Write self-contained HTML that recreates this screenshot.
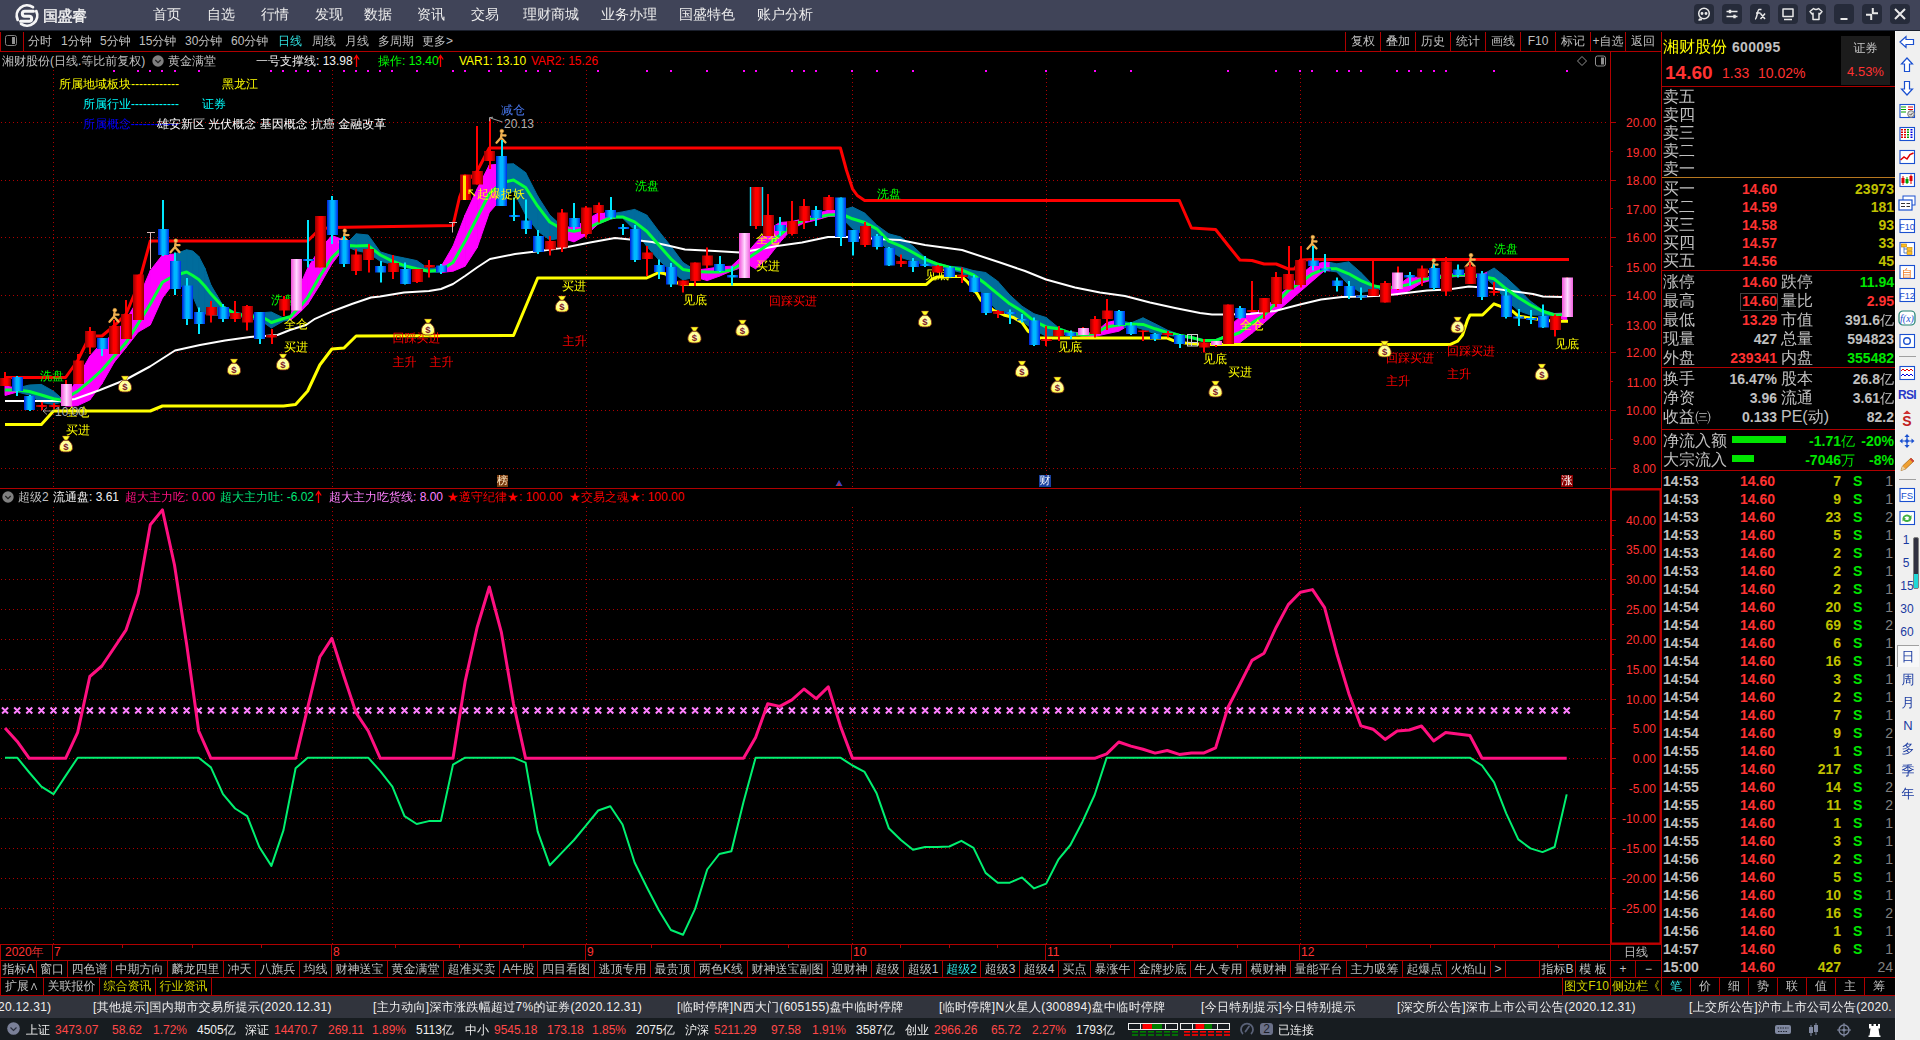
<!DOCTYPE html>
<html lang="zh-CN"><head><meta charset="utf-8"><title>国盛睿 - 湘财股份 600095</title><style>
html,body{margin:0;padding:0;background:#000;}
#app{position:relative;width:1920px;height:1040px;overflow:hidden;background:#000;font-family:"Liberation Sans","WenQuanYi Zen Hei",sans-serif;}
.t{position:absolute;white-space:nowrap;line-height:1;}
.lb{letter-spacing:0;}
.r{position:absolute;}
svg{overflow:visible;}
</style></head><body><div id="app">
<svg class="r" style="left:0;top:0" width="1920" height="1040" viewBox="0 0 1920 1040">
<defs><linearGradient id="gr" x1="0" x2="1" y1="0" y2="0"><stop offset="0" stop-color="#900000"/><stop offset=".4" stop-color="#ff0000"/><stop offset=".65" stop-color="#ff0000"/><stop offset="1" stop-color="#900000"/></linearGradient><linearGradient id="gb" x1="0" x2="1" y1="0" y2="0"><stop offset="0" stop-color="#0018d8"/><stop offset=".38" stop-color="#00b8ff"/><stop offset=".62" stop-color="#00b8ff"/><stop offset="1" stop-color="#0028e8"/></linearGradient><linearGradient id="gp" x1="0" x2="1" y1="0" y2="0"><stop offset="0" stop-color="#f050d8"/><stop offset=".5" stop-color="#ffd8ff"/><stop offset="1" stop-color="#f060e0"/></linearGradient><radialGradient id="gbag" cx=".5" cy=".45" r=".6"><stop offset="0" stop-color="#ffffd8"/><stop offset=".6" stop-color="#ffff90"/><stop offset="1" stop-color="#ffff20"/></radialGradient></defs>
<path d="M1 122.5H1607" stroke="#b00000" stroke-width="1" stroke-dasharray="1 3"/>
<path d="M1 180.5H1607" stroke="#b00000" stroke-width="1" stroke-dasharray="1 3"/>
<path d="M1 237.5H1607" stroke="#b00000" stroke-width="1" stroke-dasharray="1 3"/>
<path d="M1 295.5H1607" stroke="#b00000" stroke-width="1" stroke-dasharray="1 3"/>
<path d="M1 352.5H1607" stroke="#b00000" stroke-width="1" stroke-dasharray="1 3"/>
<path d="M1 410.5H1607" stroke="#b00000" stroke-width="1" stroke-dasharray="1 3"/>
<path d="M1 468.5H1607" stroke="#b00000" stroke-width="1" stroke-dasharray="1 3"/>
<path d="M53.5 70V488" stroke="#b00000" stroke-width="1" stroke-dasharray="1 3"/>
<path d="M53.5 507V944" stroke="#b00000" stroke-width="1" stroke-dasharray="1 3"/>
<path d="M332.5 70V488" stroke="#b00000" stroke-width="1" stroke-dasharray="1 3"/>
<path d="M332.5 507V944" stroke="#b00000" stroke-width="1" stroke-dasharray="1 3"/>
<path d="M586.5 70V488" stroke="#b00000" stroke-width="1" stroke-dasharray="1 3"/>
<path d="M586.5 507V944" stroke="#b00000" stroke-width="1" stroke-dasharray="1 3"/>
<path d="M852.5 70V488" stroke="#b00000" stroke-width="1" stroke-dasharray="1 3"/>
<path d="M852.5 507V944" stroke="#b00000" stroke-width="1" stroke-dasharray="1 3"/>
<path d="M1046.5 70V488" stroke="#b00000" stroke-width="1" stroke-dasharray="1 3"/>
<path d="M1046.5 507V944" stroke="#b00000" stroke-width="1" stroke-dasharray="1 3"/>
<path d="M1300.5 70V488" stroke="#b00000" stroke-width="1" stroke-dasharray="1 3"/>
<path d="M1300.5 507V944" stroke="#b00000" stroke-width="1" stroke-dasharray="1 3"/>
<rect x="113" y="70" width="2" height="2" fill="#ff00ff"/>
<rect x="137" y="70" width="2" height="2" fill="#ff00ff"/>
<rect x="149" y="70" width="2" height="2" fill="#ff00ff"/>
<rect x="161" y="70" width="2" height="2" fill="#ff00ff"/>
<rect x="174" y="70" width="2" height="2" fill="#ff00ff"/>
<rect x="198" y="70" width="2" height="2" fill="#ff00ff"/>
<rect x="270" y="70" width="2" height="2" fill="#ff00ff"/>
<rect x="282" y="70" width="2" height="2" fill="#ff00ff"/>
<rect x="295" y="70" width="2" height="2" fill="#ff00ff"/>
<rect x="307" y="70" width="2" height="2" fill="#ff00ff"/>
<rect x="319" y="70" width="2" height="2" fill="#ff00ff"/>
<rect x="343" y="70" width="2" height="2" fill="#ff00ff"/>
<rect x="355" y="70" width="2" height="2" fill="#ff00ff"/>
<rect x="367" y="70" width="2" height="2" fill="#ff00ff"/>
<rect x="379" y="70" width="2" height="2" fill="#ff00ff"/>
<rect x="391" y="70" width="2" height="2" fill="#ff00ff"/>
<rect x="416" y="70" width="2" height="2" fill="#ff00ff"/>
<rect x="452" y="70" width="2" height="2" fill="#ff00ff"/>
<rect x="464" y="70" width="2" height="2" fill="#ff00ff"/>
<rect x="488" y="70" width="2" height="2" fill="#ff00ff"/>
<rect x="500" y="70" width="2" height="2" fill="#ff00ff"/>
<rect x="525" y="70" width="2" height="2" fill="#ff00ff"/>
<rect x="537" y="70" width="2" height="2" fill="#ff00ff"/>
<rect x="549" y="70" width="2" height="2" fill="#ff00ff"/>
<rect x="597" y="70" width="2" height="2" fill="#ff00ff"/>
<rect x="646" y="70" width="2" height="2" fill="#ff00ff"/>
<rect x="670" y="70" width="2" height="2" fill="#ff00ff"/>
<rect x="706" y="70" width="2" height="2" fill="#ff00ff"/>
<rect x="743" y="70" width="2" height="2" fill="#ff00ff"/>
<rect x="755" y="70" width="2" height="2" fill="#ff00ff"/>
<rect x="791" y="70" width="2" height="2" fill="#ff00ff"/>
<rect x="803" y="70" width="2" height="2" fill="#ff00ff"/>
<rect x="815" y="70" width="2" height="2" fill="#ff00ff"/>
<rect x="851" y="70" width="2" height="2" fill="#ff00ff"/>
<rect x="876" y="70" width="2" height="2" fill="#ff00ff"/>
<rect x="912" y="70" width="2" height="2" fill="#ff00ff"/>
<rect x="985" y="70" width="2" height="2" fill="#ff00ff"/>
<rect x="1045" y="70" width="2" height="2" fill="#ff00ff"/>
<rect x="1094" y="70" width="2" height="2" fill="#ff00ff"/>
<rect x="1130" y="70" width="2" height="2" fill="#ff00ff"/>
<rect x="1227" y="70" width="2" height="2" fill="#ff00ff"/>
<rect x="1275" y="70" width="2" height="2" fill="#ff00ff"/>
<rect x="1299" y="70" width="2" height="2" fill="#ff00ff"/>
<rect x="1311" y="70" width="2" height="2" fill="#ff00ff"/>
<rect x="1336" y="70" width="2" height="2" fill="#ff00ff"/>
<rect x="1348" y="70" width="2" height="2" fill="#ff00ff"/>
<rect x="1360" y="70" width="2" height="2" fill="#ff00ff"/>
<rect x="1396" y="70" width="2" height="2" fill="#ff00ff"/>
<rect x="1408" y="70" width="2" height="2" fill="#ff00ff"/>
<rect x="1420" y="70" width="2" height="2" fill="#ff00ff"/>
<rect x="1433" y="70" width="2" height="2" fill="#ff00ff"/>
<rect x="1445" y="70" width="2" height="2" fill="#ff00ff"/>
<rect x="1493" y="70" width="2" height="2" fill="#ff00ff"/>
<rect x="1566" y="70" width="2" height="2" fill="#ff00ff"/>
<polygon points="5.0,386.0 17.2,388.0 17.2,392.0 5.0,395.5" fill="#ff00ff" stroke="#ff00ff" stroke-width="1"/>
<polygon points="17.2,388.0 29.3,385.0 29.3,395.0 17.2,392.0" fill="#006c9c" stroke="#006c9c" stroke-width="1"/>
<polygon points="29.3,385.0 41.4,384.4 41.4,402.5 29.3,395.0" fill="#006c9c" stroke="#006c9c" stroke-width="1"/>
<polygon points="41.4,384.4 53.5,391.2 53.5,404.4 41.4,402.5" fill="#006c9c" stroke="#006c9c" stroke-width="1"/>
<polygon points="53.5,391.2 60.7,397.5 60.7,402.5 53.5,404.4" fill="#006c9c" stroke="#006c9c" stroke-width="1"/>
<polygon points="60.7,397.5 65.6,392.0 65.6,406.0 60.7,402.5" fill="#ff00ff" stroke="#ff00ff" stroke-width="1"/>
<polygon points="65.6,392.0 71.0,390.0 71.0,406.2 65.6,406.0" fill="#ff00ff" stroke="#ff00ff" stroke-width="1"/>
<polygon points="71.0,390.0 77.7,377.5 77.7,405.6 71.0,406.2" fill="#ff00ff" stroke="#ff00ff" stroke-width="1"/>
<polygon points="77.7,377.5 89.8,356.2 89.8,400.0 77.7,405.6" fill="#ff00ff" stroke="#ff00ff" stroke-width="1"/>
<polygon points="89.8,356.2 101.9,342.5 101.9,383.8 89.8,400.0" fill="#ff00ff" stroke="#ff00ff" stroke-width="1"/>
<polygon points="101.9,342.5 114.0,334.0 114.0,362.5 101.9,383.8" fill="#ff00ff" stroke="#ff00ff" stroke-width="1"/>
<polygon points="114.0,334.0 126.1,320.0 126.1,347.5 114.0,362.5" fill="#ff00ff" stroke="#ff00ff" stroke-width="1"/>
<polygon points="126.1,320.0 138.2,299.0 138.2,332.0 126.1,347.5" fill="#ff00ff" stroke="#ff00ff" stroke-width="1"/>
<polygon points="138.2,299.0 150.3,270.5 150.3,325.0 138.2,332.0" fill="#ff00ff" stroke="#ff00ff" stroke-width="1"/>
<polygon points="150.3,270.5 162.4,255.0 162.4,298.0 150.3,325.0" fill="#ff00ff" stroke="#ff00ff" stroke-width="1"/>
<polygon points="162.4,255.0 174.5,254.0 174.5,282.0 162.4,298.0" fill="#ff00ff" stroke="#ff00ff" stroke-width="1"/>
<polygon points="174.5,254.0 186.6,249.8 186.6,290.0 174.5,282.0" fill="#006c9c" stroke="#006c9c" stroke-width="1"/>
<polygon points="186.6,249.8 192.7,251.0 192.7,296.0 186.6,290.0" fill="#006c9c" stroke="#006c9c" stroke-width="1"/>
<polygon points="192.7,251.0 198.7,256.2 198.7,310.0 192.7,296.0" fill="#006c9c" stroke="#006c9c" stroke-width="1"/>
<polygon points="198.7,256.2 204.8,268.0 204.8,313.8 198.7,310.0" fill="#006c9c" stroke="#006c9c" stroke-width="1"/>
<polygon points="204.8,268.0 210.9,285.0 210.9,315.0 204.8,313.8" fill="#006c9c" stroke="#006c9c" stroke-width="1"/>
<polygon points="210.9,285.0 223.0,305.6 223.0,316.0 210.9,315.0" fill="#006c9c" stroke="#006c9c" stroke-width="1"/>
<polygon points="223.0,305.6 235.1,312.0 235.1,316.0 223.0,316.0" fill="#006c9c" stroke="#006c9c" stroke-width="1"/>
<polygon points="235.1,312.0 247.2,314.5 247.2,318.0 235.1,316.0" fill="#006c9c" stroke="#006c9c" stroke-width="1"/>
<polygon points="247.2,314.5 259.3,314.0 259.3,321.0 247.2,318.0" fill="#006c9c" stroke="#006c9c" stroke-width="1"/>
<polygon points="259.3,314.0 265.3,312.5 265.3,323.8 259.3,321.0" fill="#006c9c" stroke="#006c9c" stroke-width="1"/>
<polygon points="265.3,312.5 271.4,312.0 271.4,328.0 265.3,323.8" fill="#006c9c" stroke="#006c9c" stroke-width="1"/>
<polygon points="271.4,312.0 283.5,318.0 283.5,321.0 271.4,328.0" fill="#006c9c" stroke="#006c9c" stroke-width="1"/>
<polygon points="283.5,318.0 290.8,316.0 290.8,320.0 283.5,321.0" fill="#006c9c" stroke="#006c9c" stroke-width="1"/>
<polygon points="290.8,316.0 295.6,292.0 295.6,316.0 290.8,320.0" fill="#ff00ff" stroke="#ff00ff" stroke-width="1"/>
<polygon points="295.6,292.0 301.0,283.0 301.0,311.2 295.6,316.0" fill="#ff00ff" stroke="#ff00ff" stroke-width="1"/>
<polygon points="301.0,283.0 307.7,268.0 307.7,304.4 301.0,311.2" fill="#ff00ff" stroke="#ff00ff" stroke-width="1"/>
<polygon points="307.7,268.0 319.8,248.8 319.8,285.0 307.7,304.4" fill="#ff00ff" stroke="#ff00ff" stroke-width="1"/>
<polygon points="319.8,248.8 331.9,235.6 331.9,263.8 319.8,285.0" fill="#ff00ff" stroke="#ff00ff" stroke-width="1"/>
<polygon points="331.9,235.6 344.0,240.0 344.0,248.0 331.9,263.8" fill="#ff00ff" stroke="#ff00ff" stroke-width="1"/>
<polygon points="344.0,240.0 349.5,240.6 349.5,247.8 344.0,248.0" fill="#ff00ff" stroke="#ff00ff" stroke-width="1"/>
<polygon points="349.5,240.6 356.1,233.8 356.1,250.6 349.5,247.8" fill="#006c9c" stroke="#006c9c" stroke-width="1"/>
<polygon points="356.1,233.8 368.2,235.0 368.2,253.0 356.1,250.6" fill="#006c9c" stroke="#006c9c" stroke-width="1"/>
<polygon points="368.2,235.0 380.3,251.9 380.3,261.2 368.2,253.0" fill="#006c9c" stroke="#006c9c" stroke-width="1"/>
<polygon points="380.3,251.9 392.4,255.6 392.4,264.4 380.3,261.2" fill="#006c9c" stroke="#006c9c" stroke-width="1"/>
<polygon points="392.4,255.6 404.5,258.0 404.5,267.5 392.4,264.4" fill="#006c9c" stroke="#006c9c" stroke-width="1"/>
<polygon points="404.5,258.0 416.7,260.6 416.7,270.0 404.5,267.5" fill="#006c9c" stroke="#006c9c" stroke-width="1"/>
<polygon points="416.7,260.6 428.8,268.8 428.8,272.0 416.7,270.0" fill="#006c9c" stroke="#006c9c" stroke-width="1"/>
<polygon points="428.8,268.8 440.9,267.0 440.9,272.5 428.8,272.0" fill="#006c9c" stroke="#006c9c" stroke-width="1"/>
<polygon points="440.9,267.0 453.0,246.2 453.0,271.2 440.9,272.5" fill="#ff00ff" stroke="#ff00ff" stroke-width="1"/>
<polygon points="453.0,246.2 465.1,215.0 465.1,266.2 453.0,271.2" fill="#ff00ff" stroke="#ff00ff" stroke-width="1"/>
<polygon points="465.1,215.0 477.2,188.8 477.2,247.5 465.1,266.2" fill="#ff00ff" stroke="#ff00ff" stroke-width="1"/>
<polygon points="477.2,188.8 489.3,165.0 489.3,212.5 477.2,247.5" fill="#ff00ff" stroke="#ff00ff" stroke-width="1"/>
<polygon points="489.3,165.0 501.4,164.0 501.4,198.8 489.3,212.5" fill="#ff00ff" stroke="#ff00ff" stroke-width="1"/>
<polygon points="501.4,164.0 506.8,164.0 506.8,195.0 501.4,198.8" fill="#ff00ff" stroke="#ff00ff" stroke-width="1"/>
<polygon points="506.8,164.0 513.5,163.8 513.5,191.0 506.8,195.0" fill="#006c9c" stroke="#006c9c" stroke-width="1"/>
<polygon points="513.5,163.8 525.6,172.5 525.6,215.0 513.5,191.0" fill="#006c9c" stroke="#006c9c" stroke-width="1"/>
<polygon points="525.6,172.5 537.7,196.2 537.7,231.0 525.6,215.0" fill="#006c9c" stroke="#006c9c" stroke-width="1"/>
<polygon points="537.7,196.2 549.8,215.0 549.8,240.0 537.7,231.0" fill="#006c9c" stroke="#006c9c" stroke-width="1"/>
<polygon points="549.8,215.0 561.9,226.0 561.9,238.0 549.8,240.0" fill="#006c9c" stroke="#006c9c" stroke-width="1"/>
<polygon points="561.9,226.0 574.0,227.8 574.0,241.9 561.9,238.0" fill="#ff00ff" stroke="#ff00ff" stroke-width="1"/>
<polygon points="574.0,227.8 586.1,220.0 586.1,235.3 574.0,241.9" fill="#ff00ff" stroke="#ff00ff" stroke-width="1"/>
<polygon points="586.1,220.0 598.2,213.0 598.2,224.0 586.1,235.3" fill="#ff00ff" stroke="#ff00ff" stroke-width="1"/>
<polygon points="598.2,213.0 610.3,213.0 610.3,219.0 598.2,224.0" fill="#ff00ff" stroke="#ff00ff" stroke-width="1"/>
<polygon points="610.3,213.0 615.8,213.0 615.8,218.0 610.3,219.0" fill="#ff00ff" stroke="#ff00ff" stroke-width="1"/>
<polygon points="615.8,213.0 622.5,211.9 622.5,218.0 615.8,218.0" fill="#006c9c" stroke="#006c9c" stroke-width="1"/>
<polygon points="622.5,211.9 634.6,209.4 634.6,230.0 622.5,218.0" fill="#006c9c" stroke="#006c9c" stroke-width="1"/>
<polygon points="634.6,209.4 646.7,215.0 646.7,246.2 634.6,230.0" fill="#006c9c" stroke="#006c9c" stroke-width="1"/>
<polygon points="646.7,215.0 658.8,231.2 658.8,260.0 646.7,246.2" fill="#006c9c" stroke="#006c9c" stroke-width="1"/>
<polygon points="658.8,231.2 670.9,246.2 670.9,271.2 658.8,260.0" fill="#006c9c" stroke="#006c9c" stroke-width="1"/>
<polygon points="670.9,246.2 683.0,262.5 683.0,280.0 670.9,271.2" fill="#006c9c" stroke="#006c9c" stroke-width="1"/>
<polygon points="683.0,262.5 695.1,270.0 695.1,277.0 683.0,280.0" fill="#006c9c" stroke="#006c9c" stroke-width="1"/>
<polygon points="695.1,270.0 707.2,268.8 707.2,280.6 695.1,277.0" fill="#ff00ff" stroke="#ff00ff" stroke-width="1"/>
<polygon points="707.2,268.8 719.3,266.9 719.3,276.2 707.2,280.6" fill="#ff00ff" stroke="#ff00ff" stroke-width="1"/>
<polygon points="719.3,266.9 731.4,266.2 731.4,271.0 719.3,276.2" fill="#ff00ff" stroke="#ff00ff" stroke-width="1"/>
<polygon points="731.4,266.2 743.5,255.0 743.5,267.0 731.4,271.0" fill="#ff00ff" stroke="#ff00ff" stroke-width="1"/>
<polygon points="743.5,255.0 749.0,250.6 749.0,265.0 743.5,267.0" fill="#ff00ff" stroke="#ff00ff" stroke-width="1"/>
<polygon points="749.0,250.6 755.6,243.0 755.6,268.8 749.0,265.0" fill="#ff00ff" stroke="#ff00ff" stroke-width="1"/>
<polygon points="755.6,243.0 767.7,230.0 767.7,258.0 755.6,268.8" fill="#ff00ff" stroke="#ff00ff" stroke-width="1"/>
<polygon points="767.7,230.0 779.8,222.5 779.8,242.5 767.7,258.0" fill="#ff00ff" stroke="#ff00ff" stroke-width="1"/>
<polygon points="779.8,222.5 791.9,221.5 791.9,228.8 779.8,242.5" fill="#ff00ff" stroke="#ff00ff" stroke-width="1"/>
<polygon points="791.9,221.5 804.0,218.8 804.0,223.0 791.9,228.8" fill="#ff00ff" stroke="#ff00ff" stroke-width="1"/>
<polygon points="804.0,218.8 816.2,213.8 816.2,220.0 804.0,223.0" fill="#ff00ff" stroke="#ff00ff" stroke-width="1"/>
<polygon points="816.2,213.8 828.3,210.2 828.3,216.5 816.2,220.0" fill="#ff00ff" stroke="#ff00ff" stroke-width="1"/>
<polygon points="828.3,210.2 840.4,211.0 840.4,216.0 828.3,216.5" fill="#ff00ff" stroke="#ff00ff" stroke-width="1"/>
<polygon points="840.4,211.0 845.8,209.0 845.8,222.0 840.4,216.0" fill="#ff00ff" stroke="#ff00ff" stroke-width="1"/>
<polygon points="845.8,209.0 852.5,207.0 852.5,228.8 845.8,222.0" fill="#006c9c" stroke="#006c9c" stroke-width="1"/>
<polygon points="852.5,207.0 864.6,213.0 864.6,235.0 852.5,228.8" fill="#006c9c" stroke="#006c9c" stroke-width="1"/>
<polygon points="864.6,213.0 876.7,225.0 876.7,240.0 864.6,235.0" fill="#006c9c" stroke="#006c9c" stroke-width="1"/>
<polygon points="876.7,225.0 888.8,233.8 888.8,250.0 876.7,240.0" fill="#006c9c" stroke="#006c9c" stroke-width="1"/>
<polygon points="888.8,233.8 900.9,237.0 900.9,257.5 888.8,250.0" fill="#006c9c" stroke="#006c9c" stroke-width="1"/>
<polygon points="900.9,237.0 913.0,246.2 913.0,261.2 900.9,257.5" fill="#006c9c" stroke="#006c9c" stroke-width="1"/>
<polygon points="913.0,246.2 925.1,257.5 925.1,265.0 913.0,261.2" fill="#006c9c" stroke="#006c9c" stroke-width="1"/>
<polygon points="925.1,257.5 937.2,263.0 937.2,267.0 925.1,265.0" fill="#006c9c" stroke="#006c9c" stroke-width="1"/>
<polygon points="937.2,263.0 949.3,266.2 949.3,269.4 937.2,267.0" fill="#006c9c" stroke="#006c9c" stroke-width="1"/>
<polygon points="949.3,266.2 961.4,267.2 961.4,272.5 949.3,269.4" fill="#006c9c" stroke="#006c9c" stroke-width="1"/>
<polygon points="961.4,267.2 973.5,270.6 973.5,282.5 961.4,272.5" fill="#006c9c" stroke="#006c9c" stroke-width="1"/>
<polygon points="973.5,270.6 985.6,272.5 985.6,297.5 973.5,282.5" fill="#006c9c" stroke="#006c9c" stroke-width="1"/>
<polygon points="985.6,272.5 997.7,281.2 997.7,311.2 985.6,297.5" fill="#006c9c" stroke="#006c9c" stroke-width="1"/>
<polygon points="997.7,281.2 1009.8,295.0 1009.8,315.0 997.7,311.2" fill="#006c9c" stroke="#006c9c" stroke-width="1"/>
<polygon points="1009.8,295.0 1022.0,306.2 1022.0,321.2 1009.8,315.0" fill="#006c9c" stroke="#006c9c" stroke-width="1"/>
<polygon points="1022.0,306.2 1034.1,313.8 1034.1,330.0 1022.0,321.2" fill="#006c9c" stroke="#006c9c" stroke-width="1"/>
<polygon points="1034.1,313.8 1046.2,317.5 1046.2,336.2 1034.1,330.0" fill="#006c9c" stroke="#006c9c" stroke-width="1"/>
<polygon points="1046.2,317.5 1058.3,327.5 1058.3,335.0 1046.2,336.2" fill="#006c9c" stroke="#006c9c" stroke-width="1"/>
<polygon points="1058.3,327.5 1070.4,331.9 1070.4,334.4 1058.3,335.0" fill="#006c9c" stroke="#006c9c" stroke-width="1"/>
<polygon points="1070.4,331.9 1082.5,333.0 1082.5,336.0 1070.4,334.4" fill="#ff00ff" stroke="#ff00ff" stroke-width="1"/>
<polygon points="1082.5,333.0 1094.6,333.0 1094.6,336.5 1082.5,336.0" fill="#ff00ff" stroke="#ff00ff" stroke-width="1"/>
<polygon points="1094.6,333.0 1106.7,322.5 1106.7,333.8 1094.6,336.5" fill="#ff00ff" stroke="#ff00ff" stroke-width="1"/>
<polygon points="1106.7,322.5 1118.8,320.0 1118.8,331.2 1106.7,333.8" fill="#ff00ff" stroke="#ff00ff" stroke-width="1"/>
<polygon points="1118.8,320.0 1124.2,321.5 1124.2,328.0 1118.8,331.2" fill="#ff00ff" stroke="#ff00ff" stroke-width="1"/>
<polygon points="1124.2,321.5 1130.9,323.0 1130.9,325.5 1124.2,328.0" fill="#006c9c" stroke="#006c9c" stroke-width="1"/>
<polygon points="1130.9,323.0 1143.0,317.8 1143.0,329.4 1130.9,325.5" fill="#006c9c" stroke="#006c9c" stroke-width="1"/>
<polygon points="1143.0,317.8 1155.1,323.8 1155.1,333.8 1143.0,329.4" fill="#006c9c" stroke="#006c9c" stroke-width="1"/>
<polygon points="1155.1,323.8 1167.2,330.0 1167.2,335.0 1155.1,333.8" fill="#006c9c" stroke="#006c9c" stroke-width="1"/>
<polygon points="1167.2,330.0 1179.3,334.4 1179.3,336.9 1167.2,335.0" fill="#006c9c" stroke="#006c9c" stroke-width="1"/>
<polygon points="1179.3,334.4 1191.4,336.5 1191.4,338.5 1179.3,336.9" fill="#006c9c" stroke="#006c9c" stroke-width="1"/>
<polygon points="1191.4,336.5 1203.5,339.5 1203.5,341.7 1191.4,338.5" fill="#006c9c" stroke="#006c9c" stroke-width="1"/>
<polygon points="1203.5,339.5 1215.6,339.5 1215.6,341.7 1203.5,341.7" fill="#006c9c" stroke="#006c9c" stroke-width="1"/>
<polygon points="1215.6,339.5 1222.9,336.5 1222.9,338.7 1215.6,341.7" fill="#006c9c" stroke="#006c9c" stroke-width="1"/>
<polygon points="1222.9,336.5 1227.8,328.8 1227.8,342.8 1222.9,338.7" fill="#ff00ff" stroke="#ff00ff" stroke-width="1"/>
<polygon points="1227.8,328.8 1233.2,323.0 1233.2,342.8 1227.8,342.8" fill="#ff00ff" stroke="#ff00ff" stroke-width="1"/>
<polygon points="1233.2,323.0 1239.9,316.9 1239.9,342.5 1233.2,342.8" fill="#ff00ff" stroke="#ff00ff" stroke-width="1"/>
<polygon points="1239.9,316.9 1252.0,312.5 1252.0,333.2 1239.9,342.5" fill="#ff00ff" stroke="#ff00ff" stroke-width="1"/>
<polygon points="1252.0,312.5 1264.1,308.8 1264.1,322.8 1252.0,333.2" fill="#ff00ff" stroke="#ff00ff" stroke-width="1"/>
<polygon points="1264.1,308.8 1276.2,297.5 1276.2,312.2 1264.1,322.8" fill="#ff00ff" stroke="#ff00ff" stroke-width="1"/>
<polygon points="1276.2,297.5 1288.3,287.5 1288.3,301.9 1276.2,312.2" fill="#ff00ff" stroke="#ff00ff" stroke-width="1"/>
<polygon points="1288.3,287.5 1300.4,275.0 1300.4,291.4 1288.3,301.9" fill="#ff00ff" stroke="#ff00ff" stroke-width="1"/>
<polygon points="1300.4,275.0 1312.5,265.0 1312.5,281.0 1300.4,291.4" fill="#ff00ff" stroke="#ff00ff" stroke-width="1"/>
<polygon points="1312.5,265.0 1324.6,261.9 1324.6,270.5 1312.5,281.0" fill="#ff00ff" stroke="#ff00ff" stroke-width="1"/>
<polygon points="1324.6,261.9 1330.1,262.5 1330.1,271.0 1324.6,270.5" fill="#ff00ff" stroke="#ff00ff" stroke-width="1"/>
<polygon points="1330.1,262.5 1336.7,263.8 1336.7,271.9 1330.1,271.0" fill="#006c9c" stroke="#006c9c" stroke-width="1"/>
<polygon points="1336.7,263.8 1348.8,261.9 1348.8,285.0 1336.7,271.9" fill="#006c9c" stroke="#006c9c" stroke-width="1"/>
<polygon points="1348.8,261.9 1360.9,272.5 1360.9,292.5 1348.8,285.0" fill="#006c9c" stroke="#006c9c" stroke-width="1"/>
<polygon points="1360.9,272.5 1373.0,285.0 1373.0,290.0 1360.9,292.5" fill="#006c9c" stroke="#006c9c" stroke-width="1"/>
<polygon points="1373.0,285.0 1385.1,287.0 1385.1,289.0 1373.0,290.0" fill="#006c9c" stroke="#006c9c" stroke-width="1"/>
<polygon points="1385.1,287.0 1390.6,287.0 1390.6,294.4 1385.1,289.0" fill="#ff00ff" stroke="#ff00ff" stroke-width="1"/>
<polygon points="1390.6,287.0 1397.2,286.0 1397.2,295.0 1390.6,294.4" fill="#ff00ff" stroke="#ff00ff" stroke-width="1"/>
<polygon points="1397.2,286.0 1409.3,276.9 1409.3,290.6 1397.2,295.0" fill="#ff00ff" stroke="#ff00ff" stroke-width="1"/>
<polygon points="1409.3,276.9 1421.5,277.5 1421.5,283.0 1409.3,290.6" fill="#ff00ff" stroke="#ff00ff" stroke-width="1"/>
<polygon points="1421.5,277.5 1433.6,276.0 1433.6,279.5 1421.5,283.0" fill="#ff00ff" stroke="#ff00ff" stroke-width="1"/>
<polygon points="1433.6,276.0 1445.7,274.5 1445.7,277.5 1433.6,279.5" fill="#ff00ff" stroke="#ff00ff" stroke-width="1"/>
<polygon points="1445.7,274.5 1457.8,273.5 1457.8,276.5 1445.7,277.5" fill="#ff00ff" stroke="#ff00ff" stroke-width="1"/>
<polygon points="1457.8,273.5 1469.9,273.5 1469.9,276.5 1457.8,276.5" fill="#ff00ff" stroke="#ff00ff" stroke-width="1"/>
<polygon points="1469.9,273.5 1482.0,274.5 1482.0,278.0 1469.9,276.5" fill="#ff00ff" stroke="#ff00ff" stroke-width="1"/>
<polygon points="1482.0,274.5 1487.4,271.9 1487.4,279.4 1482.0,278.0" fill="#ff00ff" stroke="#ff00ff" stroke-width="1"/>
<polygon points="1487.4,271.9 1494.1,268.0 1494.1,285.6 1487.4,279.4" fill="#006c9c" stroke="#006c9c" stroke-width="1"/>
<polygon points="1494.1,268.0 1506.2,277.5 1506.2,300.0 1494.1,285.6" fill="#006c9c" stroke="#006c9c" stroke-width="1"/>
<polygon points="1506.2,277.5 1518.3,288.8 1518.3,310.6 1506.2,300.0" fill="#006c9c" stroke="#006c9c" stroke-width="1"/>
<polygon points="1518.3,288.8 1530.4,301.2 1530.4,315.0 1518.3,310.6" fill="#006c9c" stroke="#006c9c" stroke-width="1"/>
<polygon points="1530.4,301.2 1542.5,310.0 1542.5,315.2 1530.4,315.0" fill="#006c9c" stroke="#006c9c" stroke-width="1"/>
<polygon points="1542.5,310.0 1554.6,313.5 1554.6,316.5 1542.5,315.2" fill="#006c9c" stroke="#006c9c" stroke-width="1"/>
<polygon points="1554.6,313.5 1566.7,313.0 1566.7,320.5 1554.6,316.5" fill="#ff00ff" stroke="#ff00ff" stroke-width="1"/>
<polyline points="5.0,401.0 62.0,401.0 75.0,399.0 100.0,390.0 125.0,380.0 150.0,366.5 175.0,350.5 200.0,345.0 225.0,340.5 250.0,337.0 265.0,336.0 277.5,335.0 290.0,330.0 306.0,325.0 315.0,318.8 332.5,311.2 352.5,303.8 371.0,297.5 380.0,296.5 404.0,292.5 429.0,291.0 441.0,289.0 453.0,284.0 465.0,276.0 477.0,267.5 490.0,259.0 515.0,254.0 540.0,251.0 565.0,247.5 590.0,242.5 615.0,238.0 635.0,240.0 652.0,242.0 670.0,246.0 685.0,249.5 715.0,251.0 740.0,252.5 755.0,250.0 777.0,246.0 802.0,242.5 828.0,237.0 852.0,237.0 877.0,239.0 900.0,240.0 925.0,245.0 962.0,250.0 1000.0,262.5 1025.0,271.0 1046.0,279.5 1075.0,287.5 1100.0,292.5 1125.0,296.0 1150.0,302.5 1175.0,308.0 1200.0,313.0 1212.0,314.5 1225.0,314.5 1250.0,314.0 1275.0,311.0 1300.0,304.5 1321.0,299.5 1342.0,297.0 1363.0,296.5 1385.0,295.5 1406.0,293.0 1427.0,290.5 1448.0,289.5 1469.0,286.5 1490.0,288.0 1511.0,291.0 1533.0,294.0 1543.0,296.5 1562.0,297.0" fill="none" stroke="#ffffff" stroke-width="2" stroke-linejoin="round"/>
<polyline points="5.0,390.0 17.2,390.0 29.3,391.5 41.4,395.0 53.5,398.8 60.7,400.0 65.6,399.5 71.0,395.0 77.7,391.2 89.8,381.2 101.9,370.0 114.0,356.2 126.1,342.5 138.2,323.5 150.3,304.0 162.4,282.2 174.5,275.5 186.6,272.0 192.7,275.5 198.7,279.4 204.8,286.0 210.9,293.8 223.0,307.0 235.1,313.8 247.2,316.0 259.3,317.5 265.3,318.8 271.4,322.5 283.5,318.5 290.8,316.5 295.6,311.0 301.0,305.6 307.7,297.5 319.8,276.2 331.9,257.5 344.0,246.0 349.5,245.6 356.1,245.9 368.2,245.6 380.3,255.0 392.4,261.2 404.5,265.6 416.7,268.8 428.8,271.2 440.9,270.0 453.0,262.5 465.1,241.2 477.2,217.5 489.3,193.8 501.4,183.0 506.8,181.5 513.5,180.0 525.6,187.5 537.7,206.2 549.8,222.0 561.9,229.0 574.0,231.2 586.1,228.8 598.2,223.0 610.3,218.0 615.8,217.0 622.5,216.9 634.6,221.9 646.7,231.2 658.8,245.0 670.9,258.8 683.0,269.4 695.1,271.5 707.2,271.9 719.3,271.9 731.4,270.0 743.5,262.5 749.0,257.5 755.6,253.0 767.7,245.0 779.8,235.0 791.9,225.0 804.0,220.0 816.2,217.5 828.3,215.0 840.4,214.4 845.8,216.0 852.5,218.8 864.6,222.5 876.7,228.8 888.8,241.2 900.9,246.2 913.0,252.5 925.1,259.4 937.2,264.0 949.3,267.2 961.4,269.8 973.5,275.0 985.6,283.8 997.7,293.8 1009.8,303.8 1022.0,311.2 1034.1,321.2 1046.2,326.9 1058.3,328.8 1070.4,332.8 1082.5,335.0 1094.6,333.8 1106.7,326.9 1118.8,325.0 1124.2,324.5 1130.9,324.0 1143.0,324.4 1155.1,328.8 1167.2,332.5 1179.3,335.2 1191.4,337.5 1203.5,340.6 1215.6,340.6 1222.9,337.6 1227.8,337.0 1233.2,335.0 1239.9,332.5 1252.0,323.0 1264.1,315.0 1276.2,303.0 1288.3,290.6 1300.4,282.5 1312.5,273.8 1324.6,268.8 1330.1,268.8 1336.7,268.8 1348.8,273.8 1360.9,280.6 1373.0,285.6 1385.1,288.0 1390.6,287.5 1397.2,286.9 1409.3,284.4 1421.5,279.4 1433.6,278.0 1445.7,276.2 1457.8,275.0 1469.9,275.0 1482.0,276.2 1487.4,277.5 1494.1,278.8 1506.2,288.8 1518.3,297.5 1530.4,305.0 1542.5,311.2 1554.6,315.0 1566.7,314.4" fill="none" stroke="#00ff3c" stroke-width="3" stroke-linejoin="round"/>
<polyline points="5.0,424.5 41.4,424.5 53.5,411.0 150.3,411.0 162.4,406.0 283.5,406.0 295.6,404.5 307.7,391.0 319.8,365.0 331.9,349.0 344.0,348.0 356.1,336.0 513.5,335.5 537.7,278.0 646.7,278.0 658.8,272.5 666.0,274.0 670.9,281.0 683.0,284.5 926.3,284.4 932.4,278.8 937.2,277.0 961.4,276.3 967.5,282.0 977.2,293.8 980.8,300.0 992.9,310.0 1003.8,315.0 1013.5,317.5 1022.0,322.5 1028.0,331.2 1040.1,338.0 1167.2,338.0 1173.3,340.6 1185.4,343.0 1203.5,344.5 1450.5,344.4 1457.5,341.2 1462.5,335.0 1467.5,320.0 1470.0,315.0 1482.5,315.0 1494.0,303.8 1500.0,306.2 1512.5,311.2 1518.4,316.2 1530.4,318.0 1542.5,320.0 1554.6,321.2 1568.0,321.2" fill="none" stroke="#ffff00" stroke-width="3" stroke-linejoin="round"/>
<polyline points="5.0,377.5 65.6,377.5 77.7,360.5 89.8,336.0 101.9,336.0 114.0,326.0 126.1,314.0 138.2,285.0 150.3,241.0 307.7,241.0 319.8,229.0 331.9,227.5 453.0,225.5 459.6,197.0 465.1,183.0 477.2,171.0 489.3,148.0 840.4,148.0 846.4,170.0 852.5,188.8 857.3,195.5 864.6,200.4 1179.3,200.5 1191.4,228.0 1215.6,229.5 1227.8,245.0 1239.9,260.0 1252.0,260.5 1264.1,264.0 1276.2,264.0 1288.3,269.0 1294.3,269.0 1300.4,260.0 1312.5,259.5 1569.0,259.5" fill="none" stroke="#ff0000" stroke-width="3" stroke-linejoin="round"/>
<text x="40" y="379.7" fill="#00ff00" font-family="Liberation Sans,WenQuanYi Zen Hei,sans-serif" font-size="12">洗盘</text>
<text x="66" y="416.2" fill="#ffff00" font-family="Liberation Sans,WenQuanYi Zen Hei,sans-serif" font-size="12">全仓</text>
<text x="66" y="434.2" fill="#ffff00" font-family="Liberation Sans,WenQuanYi Zen Hei,sans-serif" font-size="12">买进</text>
<text x="271" y="303.7" fill="#00ff00" font-family="Liberation Sans,WenQuanYi Zen Hei,sans-serif" font-size="12">洗盘</text>
<text x="284" y="328.2" fill="#ffff00" font-family="Liberation Sans,WenQuanYi Zen Hei,sans-serif" font-size="12">全仓</text>
<text x="284" y="351.2" fill="#ffff00" font-family="Liberation Sans,WenQuanYi Zen Hei,sans-serif" font-size="12">买进</text>
<text x="392.5" y="341.7" fill="#ff0000" font-family="Liberation Sans,WenQuanYi Zen Hei,sans-serif" font-size="12">回踩买进</text>
<text x="392.5" y="366.2" fill="#ff0000" font-family="Liberation Sans,WenQuanYi Zen Hei,sans-serif" font-size="12">主升</text>
<text x="429.5" y="366.2" fill="#ff0000" font-family="Liberation Sans,WenQuanYi Zen Hei,sans-serif" font-size="12">主升</text>
<text x="635" y="190.2" fill="#00ff00" font-family="Liberation Sans,WenQuanYi Zen Hei,sans-serif" font-size="12">洗盘</text>
<text x="877" y="198.2" fill="#00ff00" font-family="Liberation Sans,WenQuanYi Zen Hei,sans-serif" font-size="12">洗盘</text>
<text x="562" y="290.2" fill="#ffff00" font-family="Liberation Sans,WenQuanYi Zen Hei,sans-serif" font-size="12">买进</text>
<text x="562.5" y="345.2" fill="#ff0000" font-family="Liberation Sans,WenQuanYi Zen Hei,sans-serif" font-size="12">主升</text>
<text x="683" y="304.2" fill="#ffff00" font-family="Liberation Sans,WenQuanYi Zen Hei,sans-serif" font-size="12">见底</text>
<text x="756" y="243.2" fill="#ffff00" font-family="Liberation Sans,WenQuanYi Zen Hei,sans-serif" font-size="12">全仓</text>
<text x="756" y="270.2" fill="#ffff00" font-family="Liberation Sans,WenQuanYi Zen Hei,sans-serif" font-size="12">买进</text>
<text x="769" y="305.2" fill="#ff0000" font-family="Liberation Sans,WenQuanYi Zen Hei,sans-serif" font-size="12">回踩买进</text>
<text x="925" y="279.2" fill="#ffff00" font-family="Liberation Sans,WenQuanYi Zen Hei,sans-serif" font-size="12">见底</text>
<text x="1058" y="351.2" fill="#ffff00" font-family="Liberation Sans,WenQuanYi Zen Hei,sans-serif" font-size="12">见底</text>
<text x="1203" y="363.2" fill="#ffff00" font-family="Liberation Sans,WenQuanYi Zen Hei,sans-serif" font-size="12">见底</text>
<text x="1228" y="376.2" fill="#ffff00" font-family="Liberation Sans,WenQuanYi Zen Hei,sans-serif" font-size="12">买进</text>
<text x="1240" y="329.2" fill="#ffff00" font-family="Liberation Sans,WenQuanYi Zen Hei,sans-serif" font-size="12">全仓</text>
<text x="1494" y="253.2" fill="#00ff00" font-family="Liberation Sans,WenQuanYi Zen Hei,sans-serif" font-size="12">洗盘</text>
<text x="1555" y="348.2" fill="#ffff00" font-family="Liberation Sans,WenQuanYi Zen Hei,sans-serif" font-size="12">见底</text>
<text x="1386" y="362.2" fill="#ff0000" font-family="Liberation Sans,WenQuanYi Zen Hei,sans-serif" font-size="12">回踩买进</text>
<text x="1447" y="355.2" fill="#ff0000" font-family="Liberation Sans,WenQuanYi Zen Hei,sans-serif" font-size="12">回踩买进</text>
<text x="1386" y="385.2" fill="#ff0000" font-family="Liberation Sans,WenQuanYi Zen Hei,sans-serif" font-size="12">主升</text>
<text x="1447" y="378.2" fill="#ff0000" font-family="Liberation Sans,WenQuanYi Zen Hei,sans-serif" font-size="12">主升</text>
<g transform="translate(114.5,315.8)" stroke="#f0b050" stroke-width="2.300" fill="none" stroke-linecap="round"><circle cx="0.300" cy="-5.600" r="1.900" fill="#f8c060" stroke="#d89030" stroke-width=".5"/><path d="M0 -2.800L-0.600 1.500M-0.300 -1.500L4 -1.200M-0.600 1L-5 6M-0.400 1L4 5.800"/></g>
<g transform="translate(175.5,246.3)" stroke="#f0b050" stroke-width="2.300" fill="none" stroke-linecap="round"><circle cx="0.300" cy="-5.600" r="1.900" fill="#f8c060" stroke="#d89030" stroke-width=".5"/><path d="M0 -2.800L-0.600 1.500M-0.300 -1.500L4 -1.200M-0.600 1L-5 6M-0.400 1L4 5.800"/></g>
<g transform="translate(344.5,236.3)" stroke="#f0b050" stroke-width="2.300" fill="none" stroke-linecap="round"><circle cx="0.300" cy="-5.600" r="1.900" fill="#f8c060" stroke="#d89030" stroke-width=".5"/><path d="M0 -2.800L-0.600 1.500M-0.300 -1.500L4 -1.200M-0.600 1L-5 6M-0.400 1L4 5.800"/></g>
<g transform="translate(501.5,136.7)" stroke="#f0b050" stroke-width="2.300" fill="none" stroke-linecap="round"><circle cx="0.300" cy="-5.600" r="1.900" fill="#f8c060" stroke="#d89030" stroke-width=".5"/><path d="M0 -2.800L-0.600 1.500M-0.300 -1.500L4 -1.200M-0.600 1L-5 6M-0.400 1L4 5.800"/></g>
<g transform="translate(1312.5,242.7)" stroke="#f0b050" stroke-width="2.300" fill="none" stroke-linecap="round"><circle cx="0.300" cy="-5.600" r="1.900" fill="#f8c060" stroke="#d89030" stroke-width=".5"/><path d="M0 -2.800L-0.600 1.500M-0.300 -1.500L4 -1.200M-0.600 1L-5 6M-0.400 1L4 5.800"/></g>
<g transform="translate(1433.5,265.9)" stroke="#f0b050" stroke-width="2.300" fill="none" stroke-linecap="round"><circle cx="0.300" cy="-5.600" r="1.900" fill="#f8c060" stroke="#d89030" stroke-width=".5"/><path d="M0 -2.800L-0.600 1.500M-0.300 -1.500L4 -1.200M-0.600 1L-5 6M-0.400 1L4 5.800"/></g>
<g transform="translate(1470.7,260.8)" stroke="#f0b050" stroke-width="2.300" fill="none" stroke-linecap="round"><circle cx="0.300" cy="-5.600" r="1.900" fill="#f8c060" stroke="#d89030" stroke-width=".5"/><path d="M0 -2.800L-0.600 1.500M-0.300 -1.500L4 -1.200M-0.600 1L-5 6M-0.400 1L4 5.800"/></g>
<path d="M5 372.0V386.0" stroke="#ff0000" stroke-width="2"/>
<rect x="0" y="378.0" width="11" height="8.0" fill="url(#gr)"/>
<path d="M17 376.0V396.0" stroke="#00e8ff" stroke-width="2"/>
<rect x="12" y="377.0" width="11" height="14.0" fill="url(#gb)"/>
<path d="M30 395.0V411.0" stroke="#00e8ff" stroke-width="2"/>
<rect x="24" y="396.0" width="11" height="14.0" fill="url(#gb)"/>
<path d="M42 402.0V410.0" stroke="#ff0000" stroke-width="2"/>
<rect x="36" y="405.0" width="11" height="2.0" fill="url(#gr)"/>
<path d="M54 403.0V409.0" stroke="#ff0000" stroke-width="2"/>
<rect x="49" y="405.0" width="11" height="2.0" fill="url(#gr)"/>
<path d="M66 380.0V406.0" stroke="#ff0000" stroke-width="2"/>
<rect x="61" y="384.0" width="11" height="22.0" fill="url(#gp)"/>
<path d="M78 354.0V384.0" stroke="#ff0000" stroke-width="2"/>
<rect x="73" y="360.5" width="11" height="23.5" fill="url(#gr)"/>
<path d="M90 327.0V354.0" stroke="#ff0000" stroke-width="2"/>
<rect x="85" y="331.0" width="11" height="16.5" fill="url(#gr)"/>
<path d="M102 338.0V356.0" stroke="#00e8ff" stroke-width="2"/>
<rect x="97" y="338.0" width="11" height="11.0" fill="url(#gb)"/>
<path d="M114 320.0V354.0" stroke="#ff0000" stroke-width="2"/>
<rect x="109" y="326.0" width="11" height="28.0" fill="url(#gr)"/>
<path d="M126 300.0V339.0" stroke="#ff0000" stroke-width="2"/>
<rect x="121" y="314.0" width="11" height="25.0" fill="url(#gr)"/>
<path d="M139 274.5V320.0" stroke="#ff0000" stroke-width="2"/>
<rect x="133" y="274.5" width="11" height="45.5" fill="url(#gr)"/>
<path d="M147 232.5H155M150.5 232.5V269.0" stroke="#d8b8b8" stroke-width="1" fill="none"/>
<path d="M163 200.0V256.0" stroke="#00e8ff" stroke-width="2"/>
<rect x="158" y="229.0" width="11" height="26.0" fill="url(#gb)"/>
<path d="M175 252.5V295.0" stroke="#00e8ff" stroke-width="2"/>
<rect x="170" y="261.0" width="11" height="28.0" fill="url(#gb)"/>
<path d="M187 278.0V325.0" stroke="#00e8ff" stroke-width="2"/>
<rect x="182" y="285.5" width="11" height="33.5" fill="url(#gb)"/>
<path d="M199 307.5V334.0" stroke="#00e8ff" stroke-width="2"/>
<rect x="194" y="312.0" width="11" height="12.0" fill="url(#gb)"/>
<path d="M211 301.0V322.5" stroke="#ff0000" stroke-width="2"/>
<rect x="206" y="307.0" width="11" height="8.5" fill="url(#gr)"/>
<path d="M223 304.0V322.0" stroke="#00e8ff" stroke-width="2"/>
<rect x="218" y="307.0" width="11" height="12.0" fill="url(#gb)"/>
<path d="M235 301.0V322.0" stroke="#ff0000" stroke-width="2"/>
<rect x="230" y="313.0" width="11" height="6.0" fill="url(#gr)"/>
<path d="M247 305.0V330.5" stroke="#ff0000" stroke-width="2"/>
<rect x="242" y="306.0" width="11" height="16.5" fill="url(#gr)"/>
<path d="M260 312.0V344.0" stroke="#00e8ff" stroke-width="2"/>
<rect x="254" y="312.0" width="11" height="27.0" fill="url(#gb)"/>
<path d="M272 329.0V344.0" stroke="#ff0000" stroke-width="2"/>
<rect x="266" y="335.0" width="11" height="2.5" fill="url(#gr)"/>
<path d="M284 296.0V316.0" stroke="#ff0000" stroke-width="2"/>
<rect x="279" y="299.0" width="11" height="11.5" fill="url(#gr)"/>
<path d="M296 259.0V310.5" stroke="#ff0000" stroke-width="2"/>
<rect x="291" y="259.0" width="11" height="51.5" fill="url(#gp)"/>
<path d="M308 220.0V267.5" stroke="#00e8ff" stroke-width="2"/>
<rect x="303" y="259.0" width="11" height="2.0" fill="url(#gb)"/>
<path d="M320 216.0V267.5" stroke="#ff0000" stroke-width="2"/>
<rect x="315" y="216.0" width="11" height="51.5" fill="url(#gr)"/>
<path d="M332 196.0V244.0" stroke="#00e8ff" stroke-width="2"/>
<rect x="327" y="200.0" width="11" height="35.0" fill="url(#gb)"/>
<path d="M344 236.0V267.0" stroke="#00e8ff" stroke-width="2"/>
<rect x="339" y="240.0" width="11" height="24.0" fill="url(#gb)"/>
<path d="M356 249.0V275.0" stroke="#ff0000" stroke-width="2"/>
<rect x="351" y="254.5" width="11" height="16.5" fill="url(#gr)"/>
<path d="M369 244.0V272.5" stroke="#ff0000" stroke-width="2"/>
<rect x="363" y="249.0" width="11" height="11.0" fill="url(#gr)"/>
<path d="M381 261.0V282.5" stroke="#00e8ff" stroke-width="2"/>
<rect x="375" y="266.0" width="11" height="6.5" fill="url(#gb)"/>
<path d="M393 255.0V279.0" stroke="#ff0000" stroke-width="2"/>
<rect x="388" y="263.0" width="11" height="9.0" fill="url(#gr)"/>
<path d="M405 262.5V284.5" stroke="#00e8ff" stroke-width="2"/>
<rect x="400" y="269.0" width="11" height="15.0" fill="url(#gb)"/>
<path d="M417 269.0V283.0" stroke="#ff0000" stroke-width="2"/>
<rect x="412" y="269.0" width="11" height="13.0" fill="url(#gr)"/>
<path d="M429 260.0V277.5" stroke="#ff0000" stroke-width="2"/>
<rect x="424" y="265.0" width="11" height="2.5" fill="url(#gr)"/>
<path d="M441 264.0V274.0" stroke="#00e8ff" stroke-width="2"/>
<rect x="436" y="265.5" width="11" height="6.5" fill="url(#gb)"/>
<path d="M449 222.5H457M452.5 222.5V232.5" stroke="#d8b8b8" stroke-width="1" fill="none"/>
<path d="M465 174.5V200.0" stroke="#ff0000" stroke-width="2"/>
<rect x="460" y="174.5" width="11" height="25.5" fill="url(#gr)"/>
<rect x="463" y="175.5" width="3" height="24.5" fill="#ffe000"/>
<path d="M477 126.0V184.5" stroke="#ff0000" stroke-width="2"/>
<rect x="472" y="171.0" width="11" height="13.5" fill="url(#gr)"/>
<path d="M490 119.0V169.0" stroke="#ff0000" stroke-width="2"/>
<rect x="484" y="151.0" width="11" height="10.0" fill="url(#gr)"/>
<path d="M502 140.0V206.0" stroke="#00e8ff" stroke-width="2"/>
<rect x="496" y="156.0" width="11" height="50.0" fill="url(#gb)"/>
<path d="M514 197.5V221.0" stroke="#00e8ff" stroke-width="2"/>
<rect x="509" y="215.0" width="11" height="2.0" fill="url(#gb)"/>
<path d="M526 199.5V234.0" stroke="#00e8ff" stroke-width="2"/>
<rect x="521" y="220.5" width="11" height="8.5" fill="url(#gb)"/>
<path d="M538 230.0V254.0" stroke="#00e8ff" stroke-width="2"/>
<rect x="533" y="236.0" width="11" height="16.0" fill="url(#gb)"/>
<path d="M550 236.0V255.5" stroke="#ff0000" stroke-width="2"/>
<rect x="545" y="241.0" width="11" height="8.5" fill="url(#gr)"/>
<path d="M562 209.0V252.0" stroke="#ff0000" stroke-width="2"/>
<rect x="557" y="212.5" width="11" height="35.0" fill="url(#gr)"/>
<path d="M574 203.0V230.0" stroke="#00e8ff" stroke-width="2"/>
<rect x="569" y="218.0" width="11" height="9.0" fill="url(#gb)"/>
<path d="M586 206.0V237.5" stroke="#ff0000" stroke-width="2"/>
<rect x="581" y="207.5" width="11" height="26.5" fill="url(#gr)"/>
<path d="M599 202.5V222.5" stroke="#ff0000" stroke-width="2"/>
<rect x="593" y="205.0" width="11" height="8.0" fill="url(#gr)"/>
<path d="M611 197.0V219.0" stroke="#00e8ff" stroke-width="2"/>
<rect x="605" y="210.0" width="11" height="7.5" fill="url(#gb)"/>
<path d="M623 224.0V235.0" stroke="#00e8ff" stroke-width="2"/>
<rect x="618" y="227.0" width="11" height="2.0" fill="url(#gb)"/>
<path d="M635 225.0V262.0" stroke="#00e8ff" stroke-width="2"/>
<rect x="630" y="229.0" width="11" height="31.0" fill="url(#gb)"/>
<path d="M647 246.0V276.0" stroke="#ff0000" stroke-width="2"/>
<rect x="642" y="252.5" width="11" height="6.5" fill="url(#gr)"/>
<path d="M659 259.5V279.0" stroke="#00e8ff" stroke-width="2"/>
<rect x="654" y="265.0" width="11" height="7.0" fill="url(#gb)"/>
<path d="M671 263.0V287.0" stroke="#00e8ff" stroke-width="2"/>
<rect x="666" y="267.0" width="11" height="17.5" fill="url(#gb)"/>
<path d="M683 280.5V292.5" stroke="#ff0000" stroke-width="2"/>
<rect x="678" y="280.5" width="11" height="5.0" fill="url(#gr)"/>
<path d="M695 262.5V286.0" stroke="#ff0000" stroke-width="2"/>
<rect x="690" y="262.5" width="11" height="18.5" fill="url(#gr)"/>
<path d="M707 247.5V268.0" stroke="#ff0000" stroke-width="2"/>
<rect x="702" y="255.5" width="11" height="10.0" fill="url(#gr)"/>
<path d="M720 256.0V272.0" stroke="#00e8ff" stroke-width="2"/>
<rect x="714" y="264.0" width="11" height="7.0" fill="url(#gb)"/>
<path d="M732 266.0V285.5" stroke="#00e8ff" stroke-width="2"/>
<rect x="727" y="275.0" width="11" height="2.5" fill="url(#gb)"/>
<path d="M744 233.0V278.0" stroke="#ff0000" stroke-width="2"/>
<rect x="739" y="233.0" width="11" height="45.0" fill="url(#gp)"/>
<path d="M756 187.0V229.0" stroke="#ff0000" stroke-width="2"/>
<rect x="751" y="187.0" width="11" height="39.0" fill="url(#gr)"/>
<path d="M750.5 187.0V226.0M762.5 187.0V226.0" stroke="#00e0ff" stroke-width="1.4"/>
<path d="M768 194.0V236.0" stroke="#ff0000" stroke-width="2"/>
<rect x="763" y="215.0" width="11" height="21.0" fill="url(#gr)"/>
<path d="M780 217.0V236.0" stroke="#00e8ff" stroke-width="2"/>
<rect x="775" y="225.0" width="11" height="6.0" fill="url(#gb)"/>
<path d="M792 201.0V235.5" stroke="#ff0000" stroke-width="2"/>
<rect x="787" y="221.0" width="11" height="13.0" fill="url(#gr)"/>
<path d="M804 199.0V229.0" stroke="#ff0000" stroke-width="2"/>
<rect x="799" y="206.0" width="11" height="15.0" fill="url(#gr)"/>
<path d="M816 206.0V226.0" stroke="#00e8ff" stroke-width="2"/>
<rect x="811" y="210.0" width="11" height="8.0" fill="url(#gb)"/>
<path d="M829 195.0V210.0" stroke="#ff0000" stroke-width="2"/>
<rect x="823" y="197.0" width="11" height="13.0" fill="url(#gr)"/>
<path d="M841 197.5V246.0" stroke="#00e8ff" stroke-width="2"/>
<rect x="835" y="197.5" width="11" height="39.5" fill="url(#gb)"/>
<path d="M853 230.0V255.5" stroke="#00e8ff" stroke-width="2"/>
<rect x="848" y="230.0" width="11" height="12.0" fill="url(#gb)"/>
<path d="M865 222.0V247.0" stroke="#ff0000" stroke-width="2"/>
<rect x="860" y="226.0" width="11" height="19.0" fill="url(#gr)"/>
<path d="M877 234.0V249.5" stroke="#00e8ff" stroke-width="2"/>
<rect x="872" y="236.0" width="11" height="11.0" fill="url(#gb)"/>
<path d="M889 247.0V266.0" stroke="#00e8ff" stroke-width="2"/>
<rect x="884" y="248.0" width="11" height="17.5" fill="url(#gb)"/>
<path d="M901 254.5V267.0" stroke="#ff0000" stroke-width="2"/>
<rect x="896" y="261.0" width="11" height="3.0" fill="url(#gr)"/>
<path d="M913 258.0V272.0" stroke="#00e8ff" stroke-width="2"/>
<rect x="908" y="261.0" width="11" height="6.0" fill="url(#gb)"/>
<path d="M925 256.0V267.0" stroke="#00e8ff" stroke-width="2"/>
<rect x="920" y="264.0" width="11" height="2.0" fill="url(#gb)"/>
<path d="M938 265.0V273.0" stroke="#ff0000" stroke-width="2"/>
<rect x="932" y="266.0" width="11" height="6.5" fill="url(#gr)"/>
<path d="M950 266.0V277.5" stroke="#00e8ff" stroke-width="2"/>
<rect x="944" y="267.5" width="11" height="9.5" fill="url(#gb)"/>
<path d="M962 267.5V283.0" stroke="#ff0000" stroke-width="2"/>
<rect x="957" y="275.0" width="11" height="2.0" fill="url(#gr)"/>
<path d="M974 275.0V292.5" stroke="#00e8ff" stroke-width="2"/>
<rect x="969" y="277.5" width="11" height="14.5" fill="url(#gb)"/>
<path d="M986 293.0V315.0" stroke="#00e8ff" stroke-width="2"/>
<rect x="981" y="293.0" width="11" height="20.0" fill="url(#gb)"/>
<path d="M998 310.0V318.0" stroke="#ff0000" stroke-width="2"/>
<rect x="993" y="311.0" width="11" height="3.0" fill="url(#gr)"/>
<path d="M1010 309.5V324.0" stroke="#00e8ff" stroke-width="2"/>
<rect x="1005" y="312.0" width="11" height="2.0" fill="url(#gb)"/>
<path d="M1022 314.0V322.5" stroke="#00e8ff" stroke-width="2"/>
<rect x="1017" y="319.0" width="11" height="1.5" fill="url(#gb)"/>
<path d="M1034 317.5V346.0" stroke="#00e8ff" stroke-width="2"/>
<rect x="1029" y="320.5" width="11" height="24.5" fill="url(#gb)"/>
<path d="M1046 326.0V346.0" stroke="#ff0000" stroke-width="2"/>
<rect x="1041" y="339.0" width="11" height="2.0" fill="url(#gr)"/>
<path d="M1059 326.0V341.0" stroke="#ff0000" stroke-width="2"/>
<rect x="1053" y="330.0" width="11" height="6.0" fill="url(#gr)"/>
<path d="M1071 330.5V339.0" stroke="#00e8ff" stroke-width="2"/>
<rect x="1065" y="332.5" width="11" height="3.5" fill="url(#gb)"/>
<path d="M1083 327.0V335.0" stroke="#ff0000" stroke-width="2"/>
<rect x="1078" y="328.0" width="11" height="7.0" fill="url(#gp)"/>
<path d="M1095 316.0V337.5" stroke="#ff0000" stroke-width="2"/>
<rect x="1090" y="319.0" width="11" height="15.0" fill="url(#gr)"/>
<path d="M1107 299.0V330.0" stroke="#ff0000" stroke-width="2"/>
<rect x="1102" y="310.5" width="11" height="8.5" fill="url(#gr)"/>
<path d="M1119 310.0V325.5" stroke="#00e8ff" stroke-width="2"/>
<rect x="1114" y="311.0" width="11" height="14.0" fill="url(#gb)"/>
<path d="M1131 322.0V335.0" stroke="#00e8ff" stroke-width="2"/>
<rect x="1126" y="325.5" width="11" height="8.5" fill="url(#gb)"/>
<path d="M1143 330.5V341.0" stroke="#ff0000" stroke-width="2"/>
<rect x="1138" y="330.5" width="11" height="1.5" fill="url(#gr)"/>
<path d="M1155 333.0V341.0" stroke="#00e8ff" stroke-width="2"/>
<rect x="1150" y="334.0" width="11" height="5.0" fill="url(#gb)"/>
<path d="M1168 331.0V337.5" stroke="#ff0000" stroke-width="2"/>
<rect x="1162" y="333.0" width="11" height="2.0" fill="url(#gr)"/>
<path d="M1180 334.0V348.0" stroke="#00e8ff" stroke-width="2"/>
<rect x="1174" y="335.0" width="11" height="9.0" fill="url(#gb)"/>
<rect x="1187.5" y="334.5" width="10" height="11.5" fill="none" stroke="#d0d0d0" stroke-width="1"/><path d="M1187 342.5h11M1191.5 334.5V346.0" stroke="#d0d0d0"/>
<path d="M1204 339.0V352.5" stroke="#ff0000" stroke-width="2"/>
<rect x="1199" y="342.5" width="11" height="5.0" fill="url(#gr)"/>
<path d="M1216 341.0V347.0" stroke="#ff0000" stroke-width="2"/>
<rect x="1211" y="341.0" width="11" height="4.0" fill="url(#gp)"/>
<path d="M1228 304.5V344.0" stroke="#ff0000" stroke-width="2"/>
<rect x="1223" y="304.5" width="11" height="39.5" fill="url(#gr)"/>
<path d="M1240 306.0V319.0" stroke="#00e8ff" stroke-width="2"/>
<rect x="1235" y="308.0" width="11" height="10.0" fill="url(#gb)"/>
<path d="M1252 281.0V312.0" stroke="#ff0000" stroke-width="2"/>
<rect x="1247" y="310.0" width="11" height="2.0" fill="url(#gr)"/>
<path d="M1264 298.0V319.0" stroke="#ff0000" stroke-width="2"/>
<rect x="1259" y="298.0" width="11" height="14.5" fill="url(#gr)"/>
<path d="M1276 272.0V307.0" stroke="#ff0000" stroke-width="2"/>
<rect x="1271" y="277.0" width="11" height="27.0" fill="url(#gr)"/>
<path d="M1289 246.0V289.5" stroke="#ff0000" stroke-width="2"/>
<rect x="1283" y="274.0" width="11" height="15.5" fill="url(#gr)"/>
<path d="M1301 246.0V287.5" stroke="#ff0000" stroke-width="2"/>
<rect x="1295" y="260.0" width="11" height="25.0" fill="url(#gr)"/>
<path d="M1313 246.0V270.5" stroke="#00e8ff" stroke-width="2"/>
<rect x="1308" y="260.5" width="11" height="5.5" fill="url(#gb)"/>
<path d="M1325 254.0V272.5" stroke="#00e8ff" stroke-width="2"/>
<rect x="1320" y="268.5" width="11" height="2.0" fill="url(#gb)"/>
<path d="M1337 277.5V291.5" stroke="#00e8ff" stroke-width="2"/>
<rect x="1332" y="280.5" width="11" height="5.5" fill="url(#gb)"/>
<path d="M1349 281.0V299.0" stroke="#00e8ff" stroke-width="2"/>
<rect x="1344" y="286.0" width="11" height="10.0" fill="url(#gb)"/>
<path d="M1361 287.5V300.0" stroke="#00e8ff" stroke-width="2"/>
<rect x="1356" y="295.5" width="11" height="2.0" fill="url(#gb)"/>
<path d="M1373 260.0V296.0" stroke="#ff0000" stroke-width="2"/>
<rect x="1368" y="289.0" width="11" height="7.0" fill="url(#gr)"/>
<path d="M1385 281.0V302.5" stroke="#ff0000" stroke-width="2"/>
<rect x="1380" y="283.0" width="11" height="19.5" fill="url(#gr)"/>
<path d="M1398 266.5V290.0" stroke="#ff0000" stroke-width="2"/>
<rect x="1392" y="272.5" width="11" height="16.5" fill="url(#gp)"/>
<path d="M1410 272.0V286.0" stroke="#00e8ff" stroke-width="2"/>
<rect x="1404" y="275.0" width="11" height="2.5" fill="url(#gb)"/>
<path d="M1422 265.5V286.0" stroke="#ff0000" stroke-width="2"/>
<rect x="1417" y="268.5" width="11" height="9.0" fill="url(#gr)"/>
<path d="M1434 264.5V290.0" stroke="#00e8ff" stroke-width="2"/>
<rect x="1429" y="268.0" width="11" height="20.0" fill="url(#gb)"/>
<path d="M1446 257.0V296.0" stroke="#ff0000" stroke-width="2"/>
<rect x="1441" y="261.5" width="11" height="30.0" fill="url(#gr)"/>
<path d="M1458 264.5V277.5" stroke="#00e8ff" stroke-width="2"/>
<rect x="1453" y="269.5" width="11" height="5.5" fill="url(#gb)"/>
<path d="M1470 262.5V284.0" stroke="#ff0000" stroke-width="2"/>
<rect x="1465" y="266.5" width="11" height="17.5" fill="url(#gr)"/>
<path d="M1482 271.0V300.0" stroke="#00e8ff" stroke-width="2"/>
<rect x="1477" y="273.5" width="11" height="23.5" fill="url(#gb)"/>
<path d="M1494 282.0V295.5" stroke="#ff0000" stroke-width="2"/>
<rect x="1489" y="291.0" width="11" height="2.0" fill="url(#gr)"/>
<path d="M1506 289.0V318.5" stroke="#00e8ff" stroke-width="2"/>
<rect x="1501" y="295.5" width="11" height="21.5" fill="url(#gb)"/>
<path d="M1519 309.0V326.0" stroke="#00e8ff" stroke-width="2"/>
<rect x="1513" y="316.5" width="11" height="2.0" fill="url(#gb)"/>
<path d="M1531 310.0V324.0" stroke="#00e8ff" stroke-width="2"/>
<rect x="1526" y="318.0" width="11" height="2.0" fill="url(#gb)"/>
<path d="M1543 304.5V328.0" stroke="#00e8ff" stroke-width="2"/>
<rect x="1538" y="316.0" width="11" height="11.5" fill="url(#gb)"/>
<path d="M1555 314.5V336.5" stroke="#ff0000" stroke-width="2"/>
<rect x="1550" y="316.0" width="11" height="14.0" fill="url(#gr)"/>
<path d="M1567 277.5V317.0" stroke="#ff0000" stroke-width="2"/>
<rect x="1562" y="277.5" width="11" height="39.5" fill="url(#gp)"/>
<text x="501" y="114.2" fill="#4878f0" font-family="Liberation Sans,WenQuanYi Zen Hei,sans-serif" font-size="12">减仓</text>
<text x="477" y="198.2" fill="#ffff00" font-family="Liberation Sans,WenQuanYi Zen Hei,sans-serif" font-size="12">起爆捉妖</text>
<g transform="translate(66.0,444.0)"><path d="M-3.800 -8H3.800L1.100 -3.600H-1.100Z" fill="#ffff20" stroke="#803020" stroke-width=".5"/><path d="M-2.200 -3.700C-5 -2 -7 1 -6.600 4.500C-6.300 7.500 -3.500 8 0 8C3.500 8 6.300 7.500 6.600 4.500C7 1 5 -2 2.200 -3.700Z" fill="url(#gbag)" stroke="#702020" stroke-width=".8"/><text x="0" y="5.800" font-size="9.500" font-weight="bold" fill="#802020" text-anchor="middle" font-family="Liberation Sans,sans-serif">$</text></g>
<g transform="translate(125.0,384.0)"><path d="M-3.800 -8H3.800L1.100 -3.600H-1.100Z" fill="#ffff20" stroke="#803020" stroke-width=".5"/><path d="M-2.200 -3.700C-5 -2 -7 1 -6.600 4.500C-6.300 7.500 -3.500 8 0 8C3.500 8 6.300 7.500 6.600 4.500C7 1 5 -2 2.200 -3.700Z" fill="url(#gbag)" stroke="#702020" stroke-width=".8"/><text x="0" y="5.800" font-size="9.500" font-weight="bold" fill="#802020" text-anchor="middle" font-family="Liberation Sans,sans-serif">$</text></g>
<g transform="translate(234.0,367.0)"><path d="M-3.800 -8H3.800L1.100 -3.600H-1.100Z" fill="#ffff20" stroke="#803020" stroke-width=".5"/><path d="M-2.200 -3.700C-5 -2 -7 1 -6.600 4.500C-6.300 7.500 -3.500 8 0 8C3.500 8 6.300 7.500 6.600 4.500C7 1 5 -2 2.200 -3.700Z" fill="url(#gbag)" stroke="#702020" stroke-width=".8"/><text x="0" y="5.800" font-size="9.500" font-weight="bold" fill="#802020" text-anchor="middle" font-family="Liberation Sans,sans-serif">$</text></g>
<g transform="translate(283.0,362.0)"><path d="M-3.800 -8H3.800L1.100 -3.600H-1.100Z" fill="#ffff20" stroke="#803020" stroke-width=".5"/><path d="M-2.200 -3.700C-5 -2 -7 1 -6.600 4.500C-6.300 7.500 -3.500 8 0 8C3.500 8 6.300 7.500 6.600 4.500C7 1 5 -2 2.200 -3.700Z" fill="url(#gbag)" stroke="#702020" stroke-width=".8"/><text x="0" y="5.800" font-size="9.500" font-weight="bold" fill="#802020" text-anchor="middle" font-family="Liberation Sans,sans-serif">$</text></g>
<g transform="translate(428.0,327.0)"><path d="M-3.800 -8H3.800L1.100 -3.600H-1.100Z" fill="#ffff20" stroke="#803020" stroke-width=".5"/><path d="M-2.200 -3.700C-5 -2 -7 1 -6.600 4.500C-6.300 7.500 -3.500 8 0 8C3.500 8 6.300 7.500 6.600 4.500C7 1 5 -2 2.200 -3.700Z" fill="url(#gbag)" stroke="#702020" stroke-width=".8"/><text x="0" y="5.800" font-size="9.500" font-weight="bold" fill="#802020" text-anchor="middle" font-family="Liberation Sans,sans-serif">$</text></g>
<g transform="translate(562.0,304.0)"><path d="M-3.800 -8H3.800L1.100 -3.600H-1.100Z" fill="#ffff20" stroke="#803020" stroke-width=".5"/><path d="M-2.200 -3.700C-5 -2 -7 1 -6.600 4.500C-6.300 7.500 -3.500 8 0 8C3.500 8 6.300 7.500 6.600 4.500C7 1 5 -2 2.200 -3.700Z" fill="url(#gbag)" stroke="#702020" stroke-width=".8"/><text x="0" y="5.800" font-size="9.500" font-weight="bold" fill="#802020" text-anchor="middle" font-family="Liberation Sans,sans-serif">$</text></g>
<g transform="translate(694.5,335.0)"><path d="M-3.800 -8H3.800L1.100 -3.600H-1.100Z" fill="#ffff20" stroke="#803020" stroke-width=".5"/><path d="M-2.200 -3.700C-5 -2 -7 1 -6.600 4.500C-6.300 7.500 -3.500 8 0 8C3.500 8 6.300 7.500 6.600 4.500C7 1 5 -2 2.200 -3.700Z" fill="url(#gbag)" stroke="#702020" stroke-width=".8"/><text x="0" y="5.800" font-size="9.500" font-weight="bold" fill="#802020" text-anchor="middle" font-family="Liberation Sans,sans-serif">$</text></g>
<g transform="translate(742.5,328.0)"><path d="M-3.800 -8H3.800L1.100 -3.600H-1.100Z" fill="#ffff20" stroke="#803020" stroke-width=".5"/><path d="M-2.200 -3.700C-5 -2 -7 1 -6.600 4.500C-6.300 7.500 -3.500 8 0 8C3.500 8 6.300 7.500 6.600 4.500C7 1 5 -2 2.200 -3.700Z" fill="url(#gbag)" stroke="#702020" stroke-width=".8"/><text x="0" y="5.800" font-size="9.500" font-weight="bold" fill="#802020" text-anchor="middle" font-family="Liberation Sans,sans-serif">$</text></g>
<g transform="translate(925.0,319.0)"><path d="M-3.800 -8H3.800L1.100 -3.600H-1.100Z" fill="#ffff20" stroke="#803020" stroke-width=".5"/><path d="M-2.200 -3.700C-5 -2 -7 1 -6.600 4.500C-6.300 7.500 -3.500 8 0 8C3.500 8 6.300 7.500 6.600 4.500C7 1 5 -2 2.200 -3.700Z" fill="url(#gbag)" stroke="#702020" stroke-width=".8"/><text x="0" y="5.800" font-size="9.500" font-weight="bold" fill="#802020" text-anchor="middle" font-family="Liberation Sans,sans-serif">$</text></g>
<g transform="translate(1022.0,369.0)"><path d="M-3.800 -8H3.800L1.100 -3.600H-1.100Z" fill="#ffff20" stroke="#803020" stroke-width=".5"/><path d="M-2.200 -3.700C-5 -2 -7 1 -6.600 4.500C-6.300 7.500 -3.500 8 0 8C3.500 8 6.300 7.500 6.600 4.500C7 1 5 -2 2.200 -3.700Z" fill="url(#gbag)" stroke="#702020" stroke-width=".8"/><text x="0" y="5.800" font-size="9.500" font-weight="bold" fill="#802020" text-anchor="middle" font-family="Liberation Sans,sans-serif">$</text></g>
<g transform="translate(1057.5,385.0)"><path d="M-3.800 -8H3.800L1.100 -3.600H-1.100Z" fill="#ffff20" stroke="#803020" stroke-width=".5"/><path d="M-2.200 -3.700C-5 -2 -7 1 -6.600 4.500C-6.300 7.500 -3.500 8 0 8C3.500 8 6.300 7.500 6.600 4.500C7 1 5 -2 2.200 -3.700Z" fill="url(#gbag)" stroke="#702020" stroke-width=".8"/><text x="0" y="5.800" font-size="9.500" font-weight="bold" fill="#802020" text-anchor="middle" font-family="Liberation Sans,sans-serif">$</text></g>
<g transform="translate(1215.5,389.0)"><path d="M-3.800 -8H3.800L1.100 -3.600H-1.100Z" fill="#ffff20" stroke="#803020" stroke-width=".5"/><path d="M-2.200 -3.700C-5 -2 -7 1 -6.600 4.500C-6.300 7.500 -3.500 8 0 8C3.500 8 6.300 7.500 6.600 4.500C7 1 5 -2 2.200 -3.700Z" fill="url(#gbag)" stroke="#702020" stroke-width=".8"/><text x="0" y="5.800" font-size="9.500" font-weight="bold" fill="#802020" text-anchor="middle" font-family="Liberation Sans,sans-serif">$</text></g>
<g transform="translate(1384.6,349.0)"><path d="M-3.800 -8H3.800L1.100 -3.600H-1.100Z" fill="#ffff20" stroke="#803020" stroke-width=".5"/><path d="M-2.200 -3.700C-5 -2 -7 1 -6.600 4.500C-6.300 7.500 -3.500 8 0 8C3.500 8 6.300 7.500 6.600 4.500C7 1 5 -2 2.200 -3.700Z" fill="url(#gbag)" stroke="#702020" stroke-width=".8"/><text x="0" y="5.800" font-size="9.500" font-weight="bold" fill="#802020" text-anchor="middle" font-family="Liberation Sans,sans-serif">$</text></g>
<g transform="translate(1457.6,325.0)"><path d="M-3.800 -8H3.800L1.100 -3.600H-1.100Z" fill="#ffff20" stroke="#803020" stroke-width=".5"/><path d="M-2.200 -3.700C-5 -2 -7 1 -6.600 4.500C-6.300 7.500 -3.500 8 0 8C3.500 8 6.300 7.500 6.600 4.500C7 1 5 -2 2.200 -3.700Z" fill="url(#gbag)" stroke="#702020" stroke-width=".8"/><text x="0" y="5.800" font-size="9.500" font-weight="bold" fill="#802020" text-anchor="middle" font-family="Liberation Sans,sans-serif">$</text></g>
<g transform="translate(1541.8,372.0)"><path d="M-3.800 -8H3.800L1.100 -3.600H-1.100Z" fill="#ffff20" stroke="#803020" stroke-width=".5"/><path d="M-2.200 -3.700C-5 -2 -7 1 -6.600 4.500C-6.300 7.500 -3.500 8 0 8C3.500 8 6.300 7.500 6.600 4.500C7 1 5 -2 2.200 -3.700Z" fill="url(#gbag)" stroke="#702020" stroke-width=".8"/><text x="0" y="5.800" font-size="9.500" font-weight="bold" fill="#802020" text-anchor="middle" font-family="Liberation Sans,sans-serif">$</text></g>
<text x="504" y="128" fill="#b0b0b0" font-family="Liberation Sans,WenQuanYi Zen Hei,sans-serif" font-size="12">20.13</text><path d="M502.500 122l-13-4.300v3.500M489.500 117.700l3.500-.5" stroke="#b0b0b0" fill="none" stroke-width=".9"/>
<text x="55" y="416" fill="#b0b0b0" font-family="Liberation Sans,WenQuanYi Zen Hei,sans-serif" font-size="12">10.00</text><path d="M54 411h-11l4-3.500M43 411l4 3.500" stroke="#b0b0b0" fill="none" stroke-width=".8"/>
<path d="M475 196l-6-6m0 4v-4h4" stroke="#ffff00" fill="none" stroke-width="1.2"/>
<path d="M1610.5 52V489" stroke="#b00000"/>
<path d="M1611 122.5h5" stroke="#b00000"/>
<text x="1656" y="127.0" fill="#ff3232" text-anchor="end" font-family="Liberation Sans,WenQuanYi Zen Hei,sans-serif" font-size="12">20.00</text>
<path d="M1611 151.5h2" stroke="#b00000"/>
<text x="1656" y="157.0" fill="#ff3232" text-anchor="end" font-family="Liberation Sans,WenQuanYi Zen Hei,sans-serif" font-size="12">19.00</text>
<path d="M1611 180.5h5" stroke="#b00000"/>
<text x="1656" y="185.0" fill="#ff3232" text-anchor="end" font-family="Liberation Sans,WenQuanYi Zen Hei,sans-serif" font-size="12">18.00</text>
<path d="M1611 208.5h2" stroke="#b00000"/>
<text x="1656" y="214.0" fill="#ff3232" text-anchor="end" font-family="Liberation Sans,WenQuanYi Zen Hei,sans-serif" font-size="12">17.00</text>
<path d="M1611 237.5h5" stroke="#b00000"/>
<text x="1656" y="242.0" fill="#ff3232" text-anchor="end" font-family="Liberation Sans,WenQuanYi Zen Hei,sans-serif" font-size="12">16.00</text>
<path d="M1611 266.5h2" stroke="#b00000"/>
<text x="1656" y="272.0" fill="#ff3232" text-anchor="end" font-family="Liberation Sans,WenQuanYi Zen Hei,sans-serif" font-size="12">15.00</text>
<path d="M1611 295.5h5" stroke="#b00000"/>
<text x="1656" y="300.0" fill="#ff3232" text-anchor="end" font-family="Liberation Sans,WenQuanYi Zen Hei,sans-serif" font-size="12">14.00</text>
<path d="M1611 324.5h2" stroke="#b00000"/>
<text x="1656" y="330.0" fill="#ff3232" text-anchor="end" font-family="Liberation Sans,WenQuanYi Zen Hei,sans-serif" font-size="12">13.00</text>
<path d="M1611 352.5h5" stroke="#b00000"/>
<text x="1656" y="357.0" fill="#ff3232" text-anchor="end" font-family="Liberation Sans,WenQuanYi Zen Hei,sans-serif" font-size="12">12.00</text>
<path d="M1611 381.5h2" stroke="#b00000"/>
<text x="1656" y="387.0" fill="#ff3232" text-anchor="end" font-family="Liberation Sans,WenQuanYi Zen Hei,sans-serif" font-size="12">11.00</text>
<path d="M1611 410.5h5" stroke="#b00000"/>
<text x="1656" y="415.0" fill="#ff3232" text-anchor="end" font-family="Liberation Sans,WenQuanYi Zen Hei,sans-serif" font-size="12">10.00</text>
<path d="M1611 439.5h2" stroke="#b00000"/>
<text x="1656" y="445.0" fill="#ff3232" text-anchor="end" font-family="Liberation Sans,WenQuanYi Zen Hei,sans-serif" font-size="12">9.00</text>
<path d="M1611 468.5h5" stroke="#b00000"/>
<text x="1656" y="473.0" fill="#ff3232" text-anchor="end" font-family="Liberation Sans,WenQuanYi Zen Hei,sans-serif" font-size="12">8.00</text>
<path d="M1 520.5H1607" stroke="#b00000" stroke-width="1" stroke-dasharray="1 3"/>
<path d="M1 549.5H1607" stroke="#b00000" stroke-width="1" stroke-dasharray="1 3"/>
<path d="M1 579.5H1607" stroke="#b00000" stroke-width="1" stroke-dasharray="1 3"/>
<path d="M1 609.5H1607" stroke="#b00000" stroke-width="1" stroke-dasharray="1 3"/>
<path d="M1 639.5H1607" stroke="#b00000" stroke-width="1" stroke-dasharray="1 3"/>
<path d="M1 669.5H1607" stroke="#b00000" stroke-width="1" stroke-dasharray="1 3"/>
<path d="M1 699.5H1607" stroke="#b00000" stroke-width="1" stroke-dasharray="1 3"/>
<path d="M1 728.5H1607" stroke="#b00000" stroke-width="1" stroke-dasharray="1 3"/>
<path d="M1 788.5H1607" stroke="#b00000" stroke-width="1" stroke-dasharray="1 3"/>
<path d="M1 818.5H1607" stroke="#b00000" stroke-width="1" stroke-dasharray="1 3"/>
<path d="M1 848.5H1607" stroke="#b00000" stroke-width="1" stroke-dasharray="1 3"/>
<path d="M1 878.5H1607" stroke="#b00000" stroke-width="1" stroke-dasharray="1 3"/>
<path d="M1 908.5H1607" stroke="#b00000" stroke-width="1" stroke-dasharray="1 3"/>
<path d="M1 758.5H1607" stroke="#b00000" stroke-width="1" stroke-dasharray="1 3"/>
<path d="M2.0 707.500l6 6M8.1 707.500l-6 6M14.2 707.500l6 6M20.2 707.500l-6 6M26.3 707.500l6 6M32.3 707.500l-6 6M38.4 707.500l6 6M44.4 707.500l-6 6M50.5 707.500l6 6M56.5 707.500l-6 6M62.6 707.500l6 6M68.6 707.500l-6 6M74.7 707.500l6 6M80.7 707.500l-6 6M86.8 707.500l6 6M92.8 707.500l-6 6M98.9 707.500l6 6M104.9 707.500l-6 6M111.0 707.500l6 6M117.0 707.500l-6 6M123.1 707.500l6 6M129.1 707.500l-6 6M135.2 707.500l6 6M141.2 707.500l-6 6M147.3 707.500l6 6M153.3 707.500l-6 6M159.4 707.500l6 6M165.4 707.500l-6 6M171.5 707.500l6 6M177.5 707.500l-6 6M183.6 707.500l6 6M189.6 707.500l-6 6M195.7 707.500l6 6M201.7 707.500l-6 6M207.9 707.500l6 6M213.9 707.500l-6 6M220.0 707.500l6 6M226.0 707.500l-6 6M232.1 707.500l6 6M238.1 707.500l-6 6M244.2 707.500l6 6M250.2 707.500l-6 6M256.3 707.500l6 6M262.3 707.500l-6 6M268.4 707.500l6 6M274.4 707.500l-6 6M280.5 707.500l6 6M286.5 707.500l-6 6M292.6 707.500l6 6M298.6 707.500l-6 6M304.7 707.500l6 6M310.7 707.500l-6 6M316.8 707.500l6 6M322.8 707.500l-6 6M328.9 707.500l6 6M334.9 707.500l-6 6M341.0 707.500l6 6M347.0 707.500l-6 6M353.1 707.500l6 6M359.1 707.500l-6 6M365.2 707.500l6 6M371.2 707.500l-6 6M377.3 707.500l6 6M383.3 707.500l-6 6M389.4 707.500l6 6M395.4 707.500l-6 6M401.5 707.500l6 6M407.5 707.500l-6 6M413.7 707.500l6 6M419.7 707.500l-6 6M425.8 707.500l6 6M431.8 707.500l-6 6M437.9 707.500l6 6M443.9 707.500l-6 6M450.0 707.500l6 6M456.0 707.500l-6 6M462.1 707.500l6 6M468.1 707.500l-6 6M474.2 707.500l6 6M480.2 707.500l-6 6M486.3 707.500l6 6M492.3 707.500l-6 6M498.4 707.500l6 6M504.4 707.500l-6 6M510.5 707.500l6 6M516.5 707.500l-6 6M522.6 707.500l6 6M528.6 707.500l-6 6M534.7 707.500l6 6M540.7 707.500l-6 6M546.8 707.500l6 6M552.8 707.500l-6 6M558.9 707.500l6 6M564.9 707.500l-6 6M571.0 707.500l6 6M577.0 707.500l-6 6M583.1 707.500l6 6M589.1 707.500l-6 6M595.2 707.500l6 6M601.2 707.500l-6 6M607.3 707.500l6 6M613.3 707.500l-6 6M619.5 707.500l6 6M625.5 707.500l-6 6M631.6 707.500l6 6M637.6 707.500l-6 6M643.7 707.500l6 6M649.7 707.500l-6 6M655.8 707.500l6 6M661.8 707.500l-6 6M667.9 707.500l6 6M673.9 707.500l-6 6M680.0 707.500l6 6M686.0 707.500l-6 6M692.1 707.500l6 6M698.1 707.500l-6 6M704.2 707.500l6 6M710.2 707.500l-6 6M716.3 707.500l6 6M722.3 707.500l-6 6M728.4 707.500l6 6M734.4 707.500l-6 6M740.5 707.500l6 6M746.5 707.500l-6 6M752.6 707.500l6 6M758.6 707.500l-6 6M764.7 707.500l6 6M770.7 707.500l-6 6M776.8 707.500l6 6M782.8 707.500l-6 6M788.9 707.500l6 6M794.9 707.500l-6 6M801.0 707.500l6 6M807.0 707.500l-6 6M813.2 707.500l6 6M819.2 707.500l-6 6M825.3 707.500l6 6M831.3 707.500l-6 6M837.4 707.500l6 6M843.4 707.500l-6 6M849.5 707.500l6 6M855.5 707.500l-6 6M861.6 707.500l6 6M867.6 707.500l-6 6M873.7 707.500l6 6M879.7 707.500l-6 6M885.8 707.500l6 6M891.8 707.500l-6 6M897.9 707.500l6 6M903.9 707.500l-6 6M910.0 707.500l6 6M916.0 707.500l-6 6M922.1 707.500l6 6M928.1 707.500l-6 6M934.2 707.500l6 6M940.2 707.500l-6 6M946.3 707.500l6 6M952.3 707.500l-6 6M958.4 707.500l6 6M964.4 707.500l-6 6M970.5 707.500l6 6M976.5 707.500l-6 6M982.6 707.500l6 6M988.6 707.500l-6 6M994.7 707.500l6 6M1000.7 707.500l-6 6M1006.8 707.500l6 6M1012.8 707.500l-6 6M1019.0 707.500l6 6M1025.0 707.500l-6 6M1031.1 707.500l6 6M1037.1 707.500l-6 6M1043.2 707.500l6 6M1049.2 707.500l-6 6M1055.3 707.500l6 6M1061.3 707.500l-6 6M1067.4 707.500l6 6M1073.4 707.500l-6 6M1079.5 707.500l6 6M1085.5 707.500l-6 6M1091.6 707.500l6 6M1097.6 707.500l-6 6M1103.7 707.500l6 6M1109.7 707.500l-6 6M1115.8 707.500l6 6M1121.8 707.500l-6 6M1127.9 707.500l6 6M1133.9 707.500l-6 6M1140.0 707.500l6 6M1146.0 707.500l-6 6M1152.1 707.500l6 6M1158.1 707.500l-6 6M1164.2 707.500l6 6M1170.2 707.500l-6 6M1176.3 707.500l6 6M1182.3 707.500l-6 6M1188.4 707.500l6 6M1194.4 707.500l-6 6M1200.5 707.500l6 6M1206.5 707.500l-6 6M1212.6 707.500l6 6M1218.6 707.500l-6 6M1224.8 707.500l6 6M1230.8 707.500l-6 6M1236.9 707.500l6 6M1242.9 707.500l-6 6M1249.0 707.500l6 6M1255.0 707.500l-6 6M1261.1 707.500l6 6M1267.1 707.500l-6 6M1273.2 707.500l6 6M1279.2 707.500l-6 6M1285.3 707.500l6 6M1291.3 707.500l-6 6M1297.4 707.500l6 6M1303.4 707.500l-6 6M1309.5 707.500l6 6M1315.5 707.500l-6 6M1321.6 707.500l6 6M1327.6 707.500l-6 6M1333.7 707.500l6 6M1339.7 707.500l-6 6M1345.8 707.500l6 6M1351.8 707.500l-6 6M1357.9 707.500l6 6M1363.9 707.500l-6 6M1370.0 707.500l6 6M1376.0 707.500l-6 6M1382.1 707.500l6 6M1388.1 707.500l-6 6M1394.2 707.500l6 6M1400.2 707.500l-6 6M1406.3 707.500l6 6M1412.3 707.500l-6 6M1418.5 707.500l6 6M1424.5 707.500l-6 6M1430.6 707.500l6 6M1436.6 707.500l-6 6M1442.7 707.500l6 6M1448.7 707.500l-6 6M1454.8 707.500l6 6M1460.8 707.500l-6 6M1466.9 707.500l6 6M1472.9 707.500l-6 6M1479.0 707.500l6 6M1485.0 707.500l-6 6M1491.1 707.500l6 6M1497.1 707.500l-6 6M1503.2 707.500l6 6M1509.2 707.500l-6 6M1515.3 707.500l6 6M1521.3 707.500l-6 6M1527.4 707.500l6 6M1533.4 707.500l-6 6M1539.5 707.500l6 6M1545.5 707.500l-6 6M1551.6 707.500l6 6M1557.6 707.500l-6 6M1563.7 707.500l6 6M1569.7 707.500l-6 6" stroke="#ff80ff" stroke-width="2" fill="none"/>
<polyline points="5.0,757.7 17.2,757.7 29.3,772.5 41.4,786.6 53.5,794.2 65.6,775.9 77.7,757.7 198.7,757.7 210.9,767.4 223.0,794.2 235.1,808.5 247.2,816.1 259.3,847.0 271.4,865.9 283.5,830.1 295.6,768.3 307.7,757.7 368.2,757.7 380.3,771.1 392.4,786.6 404.5,816.1 416.7,824.0 428.8,821.1 440.9,820.9 453.0,764.6 465.1,757.7 513.5,757.7 525.6,762.7 537.7,831.6 549.8,865.3 561.9,852.6 574.0,840.0 586.1,825.4 598.2,810.5 610.3,806.2 622.5,824.5 634.6,862.5 646.7,887.0 658.8,910.3 670.9,930.0 683.0,934.8 695.1,908.9 707.2,869.5 719.3,854.0 731.4,851.2 743.5,802.0 755.6,757.7 840.4,757.7 852.5,765.5 864.6,771.9 876.7,793.6 888.8,828.2 900.9,840.0 913.0,849.8 925.1,847.0 937.2,847.0 949.3,846.5 961.4,840.8 973.5,847.9 985.6,872.9 997.7,882.7 1009.8,882.7 1022.0,877.4 1034.1,888.4 1046.2,883.6 1058.3,859.7 1070.4,845.0 1082.5,821.7 1094.6,795.0 1106.7,757.7 1469.9,757.7 1482.0,765.5 1494.1,782.3 1506.2,813.3 1518.3,839.4 1530.4,848.4 1542.5,852.1 1554.6,847.0 1566.7,794.4" fill="none" stroke="#00f070" stroke-width="2" stroke-linejoin="round"/>
<polyline points="5.0,728.0 17.2,741.4 29.3,758.3 65.6,758.3 77.7,732.3 89.8,676.5 101.9,666.0 114.0,648.0 126.1,629.8 138.2,593.5 150.3,524.7 162.4,509.9 174.5,565.0 186.6,644.0 198.7,731.0 210.9,758.3 295.6,758.3 307.7,707.7 319.8,657.0 331.9,638.4 344.0,676.5 356.1,712.9 368.2,731.0 380.3,758.3 453.0,758.3 465.1,681.7 477.2,627.2 489.3,587.0 501.4,632.4 513.5,703.8 525.6,758.3 743.5,758.3 755.6,737.5 767.7,703.8 779.8,706.4 791.9,699.9 804.0,689.0 816.2,698.6 828.3,686.9 840.4,725.9 852.5,758.3 1094.6,758.3 1106.7,753.9 1118.8,742.0 1130.9,746.1 1143.0,749.2 1155.1,753.1 1167.2,750.5 1179.3,754.4 1191.4,753.1 1203.5,753.1 1215.6,747.9 1227.8,707.7 1239.9,684.3 1252.0,660.4 1264.1,653.2 1276.2,627.2 1288.3,604.6 1300.4,592.2 1312.5,589.6 1324.6,607.7 1336.7,653.2 1348.8,693.4 1360.9,725.9 1373.0,729.2 1385.1,739.4 1397.2,731.0 1409.3,730.0 1421.5,726.0 1433.6,740.9 1445.7,732.5 1457.8,734.1 1469.9,735.5 1482.0,758.3 1566.7,758.3" fill="none" stroke="#ff1080" stroke-width="3" stroke-linejoin="round"/>
<path d="M0 488.500H1661" stroke="#b00000"/>
<path d="M1611 489V944M1660.500 489V944M1610 489.500H1661M1610 943.500H1661" stroke="#c00000" stroke-width="2" fill="none"/>
<path d="M1612 520.5h4" stroke="#c00000"/>
<text x="1656" y="525.0" fill="#ff3232" text-anchor="end" font-family="Liberation Sans,WenQuanYi Zen Hei,sans-serif" font-size="12">40.00</text>
<path d="M1612 535.5h2" stroke="#c00000"/>
<path d="M1612 549.5h4" stroke="#c00000"/>
<text x="1656" y="554.0" fill="#ff3232" text-anchor="end" font-family="Liberation Sans,WenQuanYi Zen Hei,sans-serif" font-size="12">35.00</text>
<path d="M1612 564.5h2" stroke="#c00000"/>
<path d="M1612 579.5h4" stroke="#c00000"/>
<text x="1656" y="584.0" fill="#ff3232" text-anchor="end" font-family="Liberation Sans,WenQuanYi Zen Hei,sans-serif" font-size="12">30.00</text>
<path d="M1612 594.5h2" stroke="#c00000"/>
<path d="M1612 609.5h4" stroke="#c00000"/>
<text x="1656" y="614.0" fill="#ff3232" text-anchor="end" font-family="Liberation Sans,WenQuanYi Zen Hei,sans-serif" font-size="12">25.00</text>
<path d="M1612 624.5h2" stroke="#c00000"/>
<path d="M1612 639.5h4" stroke="#c00000"/>
<text x="1656" y="644.0" fill="#ff3232" text-anchor="end" font-family="Liberation Sans,WenQuanYi Zen Hei,sans-serif" font-size="12">20.00</text>
<path d="M1612 654.5h2" stroke="#c00000"/>
<path d="M1612 669.5h4" stroke="#c00000"/>
<text x="1656" y="674.0" fill="#ff3232" text-anchor="end" font-family="Liberation Sans,WenQuanYi Zen Hei,sans-serif" font-size="12">15.00</text>
<path d="M1612 684.5h2" stroke="#c00000"/>
<path d="M1612 699.5h4" stroke="#c00000"/>
<text x="1656" y="704.0" fill="#ff3232" text-anchor="end" font-family="Liberation Sans,WenQuanYi Zen Hei,sans-serif" font-size="12">10.00</text>
<path d="M1612 714.5h2" stroke="#c00000"/>
<path d="M1612 728.5h4" stroke="#c00000"/>
<text x="1656" y="733.0" fill="#ff3232" text-anchor="end" font-family="Liberation Sans,WenQuanYi Zen Hei,sans-serif" font-size="12">5.00</text>
<path d="M1612 743.5h2" stroke="#c00000"/>
<path d="M1612 758.5h4" stroke="#c00000"/>
<text x="1656" y="763.0" fill="#ff3232" text-anchor="end" font-family="Liberation Sans,WenQuanYi Zen Hei,sans-serif" font-size="12">0.00</text>
<path d="M1612 773.5h2" stroke="#c00000"/>
<path d="M1612 788.5h4" stroke="#c00000"/>
<text x="1656" y="793.0" fill="#ff3232" text-anchor="end" font-family="Liberation Sans,WenQuanYi Zen Hei,sans-serif" font-size="12">-5.00</text>
<path d="M1612 803.5h2" stroke="#c00000"/>
<path d="M1612 818.5h4" stroke="#c00000"/>
<text x="1656" y="823.0" fill="#ff3232" text-anchor="end" font-family="Liberation Sans,WenQuanYi Zen Hei,sans-serif" font-size="12">-10.00</text>
<path d="M1612 833.5h2" stroke="#c00000"/>
<path d="M1612 848.5h4" stroke="#c00000"/>
<text x="1656" y="853.0" fill="#ff3232" text-anchor="end" font-family="Liberation Sans,WenQuanYi Zen Hei,sans-serif" font-size="12">-15.00</text>
<path d="M1612 863.5h2" stroke="#c00000"/>
<path d="M1612 878.5h4" stroke="#c00000"/>
<text x="1656" y="883.0" fill="#ff3232" text-anchor="end" font-family="Liberation Sans,WenQuanYi Zen Hei,sans-serif" font-size="12">-20.00</text>
<path d="M1612 893.5h2" stroke="#c00000"/>
<path d="M1612 908.5h4" stroke="#c00000"/>
<text x="1656" y="913.0" fill="#ff3232" text-anchor="end" font-family="Liberation Sans,WenQuanYi Zen Hei,sans-serif" font-size="12">-25.00</text>
<path d="M1612 923.5h2" stroke="#c00000"/>
</svg>
<div class="r" style="left:0px;top:0px;width:1920px;height:30px;background:#404458;"></div>
<div class="r" style="left:0px;top:30px;width:1920px;height:1px;background:#1a1f2c;"></div>
<svg class="r" style="left:14px;top:3px" width="26" height="25" viewBox="0 0 26 25"><g fill="none" stroke="#f6f6f6" stroke-linecap="round"><path d="M22.300 8.100A10.300 10.300 0 0 1 7.100 20.900M3.700 16.900A10.300 10.300 0 0 1 18.900 4.100" stroke-width="2.800"/><path d="M19.500 8.300H10.800a2.500 2.500 0 0 0 0 5H15.200a2.500 2.500 0 0 1 0 5H6.500" stroke-width="3"/></g></svg>
<span class="t " style="top:8px;color:#f4f4f4;font-size:15px;left:43px;font-weight:bold;letter-spacing:-0.5px;-webkit-text-stroke:0.4px #f4f4f4;">国盛睿</span>
<span class="t " style="top:7px;color:#eeeeee;font-size:14px;left:153px;">首页</span>
<span class="t " style="top:7px;color:#eeeeee;font-size:14px;left:207px;">自选</span>
<span class="t " style="top:7px;color:#eeeeee;font-size:14px;left:261px;">行情</span>
<span class="t " style="top:7px;color:#eeeeee;font-size:14px;left:315px;">发现</span>
<span class="t " style="top:7px;color:#eeeeee;font-size:14px;left:364px;">数据</span>
<span class="t " style="top:7px;color:#eeeeee;font-size:14px;left:417px;">资讯</span>
<span class="t " style="top:7px;color:#eeeeee;font-size:14px;left:471px;">交易</span>
<span class="t " style="top:7px;color:#eeeeee;font-size:14px;left:523px;">理财商城</span>
<span class="t " style="top:7px;color:#eeeeee;font-size:14px;left:601px;">业务办理</span>
<span class="t " style="top:7px;color:#eeeeee;font-size:14px;left:679px;">国盛特色</span>
<span class="t " style="top:7px;color:#eeeeee;font-size:14px;left:757px;">账户分析</span>
<svg class="r" style="left:1694px;top:4px" width="20" height="20" viewBox="0 0 20 20"><rect width="20" height="20" rx="4" fill="#262b3a"/><g fill="none" stroke="#e8e8e8" stroke-width="1.5" stroke-linejoin="round"><circle cx="10" cy="9.5" r="5.3"/><path d="M6.5 14.5 l-1.5 1.5 l3-.6" /><circle cx="8" cy="9.500" r=".7" fill="#e8e8e8"/><circle cx="12" cy="9.500" r=".7" fill="#e8e8e8"/></g></svg>
<svg class="r" style="left:1722px;top:4px" width="20" height="20" viewBox="0 0 20 20"><rect width="20" height="20" rx="4" fill="#262b3a"/><g fill="none" stroke="#e8e8e8" stroke-width="1.5" stroke-linejoin="round"><path d="M4.5 7.5 H15.5 M4.5 12.5 H15.5"/><path d="M8 5.8 V9.2 M12.5 10.8 V14.2" stroke-width="2.4"/></g></svg>
<svg class="r" style="left:1750px;top:4px" width="20" height="20" viewBox="0 0 20 20"><rect width="20" height="20" rx="4" fill="#262b3a"/><g fill="none" stroke="#e8e8e8" stroke-width="1.5" stroke-linejoin="round"><path d="M5 15 C7 15 7.5 5.5 9 5.5 L11.5 5.5 M6 9 H10.5 M10.5 9.5 L15 15 M15 9.5 L10.5 15" /></g></svg>
<svg class="r" style="left:1778px;top:4px" width="20" height="20" viewBox="0 0 20 20"><rect width="20" height="20" rx="4" fill="#262b3a"/><g fill="none" stroke="#e8e8e8" stroke-width="1.5" stroke-linejoin="round"><rect x="5" y="5" width="10" height="7.5"/><path d="M6 15.5 H14" /></g></svg>
<svg class="r" style="left:1806px;top:4px" width="20" height="20" viewBox="0 0 20 20"><rect width="20" height="20" rx="4" fill="#262b3a"/><g fill="none" stroke="#e8e8e8" stroke-width="1.5" stroke-linejoin="round"><path d="M7.5 4.5 L4 7.5 L6 10 L7 9.3 V15.5 H13 V9.3 L14 10 L16 7.5 L12.5 4.5 Q10 6.5 7.5 4.5 Z"/></g></svg>
<svg class="r" style="left:1834px;top:4px" width="20" height="20" viewBox="0 0 20 20"><rect width="20" height="20" rx="4" fill="#262b3a"/><g fill="none" stroke="#e8e8e8" stroke-width="1.5" stroke-linejoin="round"><path d="M6.5 15 H13.5" stroke-width="2"/></g></svg>
<svg class="r" style="left:1862px;top:4px" width="20" height="20" viewBox="0 0 20 20"><rect width="20" height="20" rx="4" fill="#262b3a"/><g fill="none" stroke="#e8e8e8" stroke-width="1.5" stroke-linejoin="round"><path d="M10.8 4 V9.2 H16 M9.2 16 V10.8 H4" stroke-width="2"/></g></svg>
<svg class="r" style="left:1890px;top:4px" width="20" height="20" viewBox="0 0 20 20"><rect width="20" height="20" rx="4" fill="#262b3a"/><g fill="none" stroke="#e8e8e8" stroke-width="1.5" stroke-linejoin="round"><path d="M5 5 L15 15 M15 5 L5 15" stroke-width="2"/></g></svg>
<div class="r" style="left:0px;top:32px;width:1px;height:20px;background:#b00000;"></div>
<div class="r" style="left:23px;top:32px;width:1px;height:20px;background:#b00000;"></div>
<div class="r" style="left:0px;top:51px;width:1661px;height:1px;background:#b00000;"></div>
<svg class="r" style="left:5px;top:35px" width="13" height="12" viewBox="0 0 13 12"><rect x=".5" y=".5" width="11" height="10" rx="2" fill="none" stroke="#808080"/><rect x="7" y="2" width="3" height="7" fill="#909090"/></svg>
<span class="t " style="top:35px;color:#c0c0c0;font-size:12px;left:28px;">分时</span>
<span class="t " style="top:35px;color:#c0c0c0;font-size:12px;left:61px;">1分钟</span>
<span class="t " style="top:35px;color:#c0c0c0;font-size:12px;left:100px;">5分钟</span>
<span class="t " style="top:35px;color:#c0c0c0;font-size:12px;left:139px;">15分钟</span>
<span class="t " style="top:35px;color:#c0c0c0;font-size:12px;left:185px;">30分钟</span>
<span class="t " style="top:35px;color:#c0c0c0;font-size:12px;left:231px;">60分钟</span>
<span class="t " style="top:35px;color:#30e0e0;font-size:12px;left:278px;">日线</span>
<span class="t " style="top:35px;color:#c0c0c0;font-size:12px;left:312px;">周线</span>
<span class="t " style="top:35px;color:#c0c0c0;font-size:12px;left:345px;">月线</span>
<span class="t " style="top:35px;color:#c0c0c0;font-size:12px;left:378px;">多周期</span>
<span class="t " style="top:35px;color:#c0c0c0;font-size:12px;left:422px;">更多&gt;</span>
<div class="r" style="left:1345px;top:32px;width:1px;height:19px;background:#b00000;"></div>
<span class="t " style="top:35px;color:#c0c0c0;font-size:12px;left:1346px;width:34px;text-align:center;">复权</span>
<div class="r" style="left:1380px;top:32px;width:1px;height:19px;background:#b00000;"></div>
<span class="t " style="top:35px;color:#c0c0c0;font-size:12px;left:1381px;width:34px;text-align:center;">叠加</span>
<div class="r" style="left:1415px;top:32px;width:1px;height:19px;background:#b00000;"></div>
<span class="t " style="top:35px;color:#c0c0c0;font-size:12px;left:1416px;width:34px;text-align:center;">历史</span>
<div class="r" style="left:1450px;top:32px;width:1px;height:19px;background:#b00000;"></div>
<span class="t " style="top:35px;color:#c0c0c0;font-size:12px;left:1451px;width:34px;text-align:center;">统计</span>
<div class="r" style="left:1485px;top:32px;width:1px;height:19px;background:#b00000;"></div>
<span class="t " style="top:35px;color:#c0c0c0;font-size:12px;left:1486px;width:34px;text-align:center;">画线</span>
<div class="r" style="left:1520px;top:32px;width:1px;height:19px;background:#b00000;"></div>
<span class="t " style="top:35px;color:#c0c0c0;font-size:12px;left:1521px;width:34px;text-align:center;">F10</span>
<div class="r" style="left:1555px;top:32px;width:1px;height:19px;background:#b00000;"></div>
<span class="t " style="top:35px;color:#c0c0c0;font-size:12px;left:1556px;width:34px;text-align:center;">标记</span>
<div class="r" style="left:1590px;top:32px;width:1px;height:19px;background:#b00000;"></div>
<span class="t " style="top:35px;color:#c0c0c0;font-size:12px;left:1591px;width:34px;text-align:center;">+自选</span>
<div class="r" style="left:1625px;top:32px;width:1px;height:19px;background:#b00000;"></div>
<span class="t " style="top:35px;color:#c0c0c0;font-size:12px;left:1626px;width:34px;text-align:center;">返回</span>
<span class="t " style="top:55px;color:#c0c0c0;font-size:12px;left:2px;">湘财股份(日线.等比前复权)</span>
<svg class="r" style="left:152px;top:55px" width="12" height="12" viewBox="0 0 12 12"><circle cx="6" cy="6" r="5.7" fill="#808080"/><path d="M3.3 5l2.7 2.700l2.700-2.700" fill="none" stroke="#202020" stroke-width="1.2"/></svg>
<span class="t " style="top:55px;color:#c0c0c0;font-size:12px;left:168px;">黄金满堂</span>
<span class="t " style="top:55px;color:#f0f0f0;font-size:12px;left:256px;">一号支撑线: 13.98</span>
<svg class="r" style="left:353px;top:55px" width="7" height="12" viewBox="0 0 7 12"><path d="M3.500 0.500V12M0.800 4.500L3.500 0.500L6.200 4.500" stroke="#ff0000" stroke-width="1.300" fill="none"/></svg>
<span class="t " style="top:55px;color:#00ff00;font-size:12px;left:378px;">操作: 13.40</span>
<svg class="r" style="left:437px;top:55px" width="7" height="12" viewBox="0 0 7 12"><path d="M3.500 0.500V12M0.800 4.500L3.500 0.500L6.200 4.500" stroke="#ff0000" stroke-width="1.300" fill="none"/></svg>
<span class="t " style="top:55px;color:#ffff00;font-size:12px;left:459px;">VAR1: 13.10</span>
<span class="t " style="top:55px;color:#ff0000;font-size:12px;left:531px;">VAR2: 15.26</span>
<span class="t " style="top:78px;color:#ffff00;font-size:12px;left:59px;">所属地域板块------------</span>
<span class="t " style="top:78px;color:#ffff00;font-size:12px;left:222px;">黑龙江</span>
<span class="t " style="top:98px;color:#00ffff;font-size:12px;left:83px;">所属行业------------</span>
<span class="t " style="top:98px;color:#00ffff;font-size:12px;left:202px;">证券</span>
<span class="t " style="top:118px;color:#0000ff;font-size:12px;left:83px;">所属概念------------</span>
<span class="t " style="top:118px;color:#ffffff;font-size:12px;left:157px;">雄安新区 光伏概念 基因概念 抗癌 金融改革</span>
<svg class="r" style="left:1576px;top:55px" width="30" height="12" viewBox="0 0 30 12"><path d="M6 1.500l4.500 4.500l-4.500 4.500l-4.500-4.500z" fill="none" stroke="#909090"/><rect x="19.500" y="1" width="10" height="10" rx="2" fill="none" stroke="#909090"/><rect x="25" y="2.500" width="3" height="7" fill="#909090"/></svg>
<div class="r" style="left:497px;top:475px;width:11px;height:12px;background:#7a3c10;"></div>
<span class="t " style="top:475px;color:#ffe8c0;font-size:11px;left:496px;width:13px;text-align:center;">榜</span>
<svg class="r" style="left:835px;top:480px" width="8" height="7" viewBox="0 0 8 7"><path d="M4 0l3.500 6h-7z" fill="#3040c0"/><path d="M4 2.500l2 3.500h-4z" fill="#c03030"/></svg>
<div class="r" style="left:1039px;top:475px;width:12px;height:12px;background:#1840a0;"></div>
<span class="t " style="top:475px;color:#ffffff;font-size:11px;left:1038px;width:14px;text-align:center;">财</span>
<div class="r" style="left:1561px;top:475px;width:12px;height:12px;background:#8a0000;"></div>
<span class="t " style="top:475px;color:#ffffff;font-size:11px;left:1560px;width:14px;text-align:center;">涨</span>
<svg class="r" style="left:2px;top:491px" width="12" height="12" viewBox="0 0 12 12"><circle cx="6" cy="6" r="5.7" fill="#808080"/><path d="M3.3 5l2.7 2.700l2.700-2.700" fill="none" stroke="#202020" stroke-width="1.2"/></svg>
<span class="t " style="top:491px;color:#c0c0c0;font-size:12px;left:18px;">超级2</span>
<span class="t " style="top:491px;color:#f0f0f0;font-size:12px;left:53px;">流通盘: 3.61</span>
<span class="t " style="top:491px;color:#ff1080;font-size:12px;left:125px;">超大主力吃: 0.00</span>
<span class="t " style="top:491px;color:#00e676;font-size:12px;left:220px;">超大主力吐: -6.02</span>
<svg class="r" style="left:315px;top:491px" width="7" height="12" viewBox="0 0 7 12"><path d="M3.500 0.500V12M0.800 4.500L3.500 0.500L6.200 4.500" stroke="#ff0000" stroke-width="1.300" fill="none"/></svg>
<span class="t " style="top:491px;color:#ff80ff;font-size:12px;left:329px;">超大主力吃货线: 8.00</span>
<span class="t " style="top:491px;color:#ff0000;font-size:12px;left:447px;">★遵守纪律★: 100.00</span>
<span class="t " style="top:491px;color:#ff0000;font-size:12px;left:569px;">★交易之魂★: 100.00</span>
<div class="r" style="left:1661px;top:32px;width:1px;height:964px;background:#b00000;"></div>
<span class="t " style="top:38.5px;color:#ffff00;font-size:16px;left:1663px;">湘财股份</span>
<span class="t " style="top:39.5px;color:#c0c0c0;font-size:14px;left:1732px;font-weight:bold;letter-spacing:0.3px;">600095</span>
<div class="r" style="left:1841px;top:36px;width:49px;height:49px;background:#1c1c1c;"></div>
<span class="t " style="top:42px;color:#c8c8c8;font-size:12px;left:1841px;width:49px;text-align:center;">证券</span>
<span class="t " style="top:65px;color:#ff3232;font-size:13px;left:1841px;width:49px;text-align:center;">4.53%</span>
<span class="t " style="top:63px;color:#ff3232;font-size:19px;left:1665px;font-weight:bold;">14.60</span>
<span class="t " style="top:66px;color:#ff3232;font-size:14px;left:1722px;">1.33</span>
<span class="t " style="top:66px;color:#ff3232;font-size:14px;left:1758px;">10.02%</span>
<div class="r" style="left:1662px;top:86px;width:233px;height:1px;background:#b00000;"></div>
<span class="t lb" style="top:88.5px;color:#c0c0c0;font-size:16px;left:1663px;">卖五</span>
<span class="t lb" style="top:106.5px;color:#c0c0c0;font-size:16px;left:1663px;">卖四</span>
<span class="t lb" style="top:124.5px;color:#c0c0c0;font-size:16px;left:1663px;">卖三</span>
<span class="t lb" style="top:142.5px;color:#c0c0c0;font-size:16px;left:1663px;">卖二</span>
<span class="t lb" style="top:160.5px;color:#c0c0c0;font-size:16px;left:1663px;">卖一</span>
<div class="r" style="left:1662px;top:177px;width:233px;height:1px;background:#b87820;"></div>
<span class="t lb" style="top:180.5px;color:#c0c0c0;font-size:16px;left:1663px;">买一</span>
<span class="t " style="top:181.5px;color:#ff3232;font-size:14px;right:143px;font-weight:bold;">14.60</span>
<span class="t " style="top:181.5px;color:#c0c000;font-size:14px;right:26px;font-weight:bold;">23973</span>
<span class="t lb" style="top:198.5px;color:#c0c0c0;font-size:16px;left:1663px;">买二</span>
<span class="t " style="top:199.5px;color:#ff3232;font-size:14px;right:143px;font-weight:bold;">14.59</span>
<span class="t " style="top:199.5px;color:#c0c000;font-size:14px;right:26px;font-weight:bold;">181</span>
<span class="t lb" style="top:216.5px;color:#c0c0c0;font-size:16px;left:1663px;">买三</span>
<span class="t " style="top:217.5px;color:#ff3232;font-size:14px;right:143px;font-weight:bold;">14.58</span>
<span class="t " style="top:217.5px;color:#c0c000;font-size:14px;right:26px;font-weight:bold;">93</span>
<span class="t lb" style="top:234.5px;color:#c0c0c0;font-size:16px;left:1663px;">买四</span>
<span class="t " style="top:235.5px;color:#ff3232;font-size:14px;right:143px;font-weight:bold;">14.57</span>
<span class="t " style="top:235.5px;color:#c0c000;font-size:14px;right:26px;font-weight:bold;">33</span>
<span class="t lb" style="top:252.5px;color:#c0c0c0;font-size:16px;left:1663px;">买五</span>
<span class="t " style="top:253.5px;color:#ff3232;font-size:14px;right:143px;font-weight:bold;">14.56</span>
<span class="t " style="top:253.5px;color:#c0c000;font-size:14px;right:26px;font-weight:bold;">45</span>
<div class="r" style="left:1662px;top:270px;width:233px;height:1px;background:#b00000;"></div>
<span class="t lb" style="top:273.5px;color:#c0c0c0;font-size:16px;left:1663px;">涨停</span>
<span class="t " style="top:274.5px;color:#ff3232;font-size:14px;right:143px;font-weight:bold;">14.60</span>
<span class="t lb" style="top:273.5px;color:#c0c0c0;font-size:16px;left:1781px;">跌停</span>
<span class="t " style="top:274.5px;color:#00e600;font-size:14px;right:26px;font-weight:bold;">11.94</span>
<span class="t lb" style="top:292.5px;color:#c0c0c0;font-size:16px;left:1663px;">最高</span>
<span class="t " style="top:293.5px;color:#ff3232;font-size:14px;right:143px;font-weight:bold;">14.60</span>
<span class="t lb" style="top:292.5px;color:#c0c0c0;font-size:16px;left:1781px;">量比</span>
<span class="t " style="top:293.5px;color:#ff3232;font-size:14px;right:26px;font-weight:bold;">2.95</span>
<span class="t lb" style="top:311.5px;color:#c0c0c0;font-size:16px;left:1663px;">最低</span>
<span class="t " style="top:312.5px;color:#ff3232;font-size:14px;right:143px;font-weight:bold;">13.29</span>
<span class="t lb" style="top:311.5px;color:#c0c0c0;font-size:16px;left:1781px;">市值</span>
<span class="t " style="top:312.5px;color:#c0c0c0;font-size:14px;right:26px;font-weight:bold;">391.6亿</span>
<span class="t lb" style="top:330.5px;color:#c0c0c0;font-size:16px;left:1663px;">现量</span>
<span class="t " style="top:331.5px;color:#c0c0c0;font-size:14px;right:143px;font-weight:bold;">427</span>
<span class="t lb" style="top:330.5px;color:#c0c0c0;font-size:16px;left:1781px;">总量</span>
<span class="t " style="top:331.5px;color:#c0c0c0;font-size:14px;right:26px;font-weight:bold;">594823</span>
<span class="t lb" style="top:349.5px;color:#c0c0c0;font-size:16px;left:1663px;">外盘</span>
<span class="t " style="top:350.5px;color:#ff3232;font-size:14px;right:143px;font-weight:bold;">239341</span>
<span class="t lb" style="top:349.5px;color:#c0c0c0;font-size:16px;left:1781px;">内盘</span>
<span class="t " style="top:350.5px;color:#00e600;font-size:14px;right:26px;font-weight:bold;">355482</span>
<div class="r" style="left:1740px;top:292.5px;width:38px;height:18px;background:transparent;border:1px solid #404040;box-sizing:border-box;"></div>
<div class="r" style="left:1662px;top:367px;width:233px;height:1px;background:#b00000;"></div>
<span class="t lb" style="top:370.5px;color:#c0c0c0;font-size:16px;left:1663px;">换手</span>
<span class="t " style="top:371.5px;color:#c0c0c0;font-size:14px;right:143px;font-weight:bold;">16.47%</span>
<span class="t lb" style="top:370.5px;color:#c0c0c0;font-size:16px;left:1781px;">股本</span>
<span class="t " style="top:371.5px;color:#c0c0c0;font-size:14px;right:26px;font-weight:bold;">26.8亿</span>
<span class="t lb" style="top:389.5px;color:#c0c0c0;font-size:16px;left:1663px;">净资</span>
<span class="t " style="top:390.5px;color:#c0c0c0;font-size:14px;right:143px;font-weight:bold;">3.96</span>
<span class="t lb" style="top:389.5px;color:#c0c0c0;font-size:16px;left:1781px;">流通</span>
<span class="t " style="top:390.5px;color:#c0c0c0;font-size:14px;right:26px;font-weight:bold;">3.61亿</span>
<span class="t lb" style="top:408.5px;color:#c0c0c0;font-size:16px;left:1663px;">收益㈢</span>
<span class="t " style="top:409.5px;color:#c0c0c0;font-size:14px;right:143px;font-weight:bold;">0.133</span>
<span class="t lb" style="top:408.5px;color:#c0c0c0;font-size:16px;left:1781px;">PE(动)</span>
<span class="t " style="top:409.5px;color:#c0c0c0;font-size:14px;right:26px;font-weight:bold;">82.2</span>
<div class="r" style="left:1662px;top:429px;width:233px;height:1px;background:#b00000;"></div>
<span class="t lb" style="top:432.5px;color:#c0c0c0;font-size:16px;left:1663px;">净流入额</span>
<div class="r" style="left:1732px;top:436px;width:54px;height:7px;background:#00e600;"></div>
<span class="t " style="top:433.5px;color:#00e600;font-size:14px;right:65px;font-weight:bold;">-1.71亿</span>
<span class="t " style="top:433.5px;color:#00e600;font-size:14px;right:26px;font-weight:bold;">-20%</span>
<span class="t lb" style="top:451.5px;color:#c0c0c0;font-size:16px;left:1663px;">大宗流入</span>
<div class="r" style="left:1732px;top:455px;width:22px;height:7px;background:#00e600;"></div>
<span class="t " style="top:452.5px;color:#00e600;font-size:14px;right:65px;font-weight:bold;">-7046万</span>
<span class="t " style="top:452.5px;color:#00e600;font-size:14px;right:26px;font-weight:bold;">-8%</span>
<div class="r" style="left:1662px;top:470px;width:233px;height:1px;background:#b00000;"></div>
<span class="t " style="top:474px;color:#c0c0c0;font-size:14px;left:1663px;font-weight:bold;">14:53</span>
<span class="t " style="top:474px;color:#ff3232;font-size:14px;right:145px;font-weight:bold;">14.60</span>
<span class="t " style="top:474px;color:#c0c000;font-size:14px;right:79px;font-weight:bold;">7</span>
<span class="t " style="top:474px;color:#00e600;font-size:14px;left:1853px;font-weight:bold;">S</span>
<span class="t " style="top:474px;color:#808080;font-size:14px;right:27px;">1</span>
<span class="t " style="top:492px;color:#c0c0c0;font-size:14px;left:1663px;font-weight:bold;">14:53</span>
<span class="t " style="top:492px;color:#ff3232;font-size:14px;right:145px;font-weight:bold;">14.60</span>
<span class="t " style="top:492px;color:#c0c000;font-size:14px;right:79px;font-weight:bold;">9</span>
<span class="t " style="top:492px;color:#00e600;font-size:14px;left:1853px;font-weight:bold;">S</span>
<span class="t " style="top:492px;color:#808080;font-size:14px;right:27px;">1</span>
<span class="t " style="top:510px;color:#c0c0c0;font-size:14px;left:1663px;font-weight:bold;">14:53</span>
<span class="t " style="top:510px;color:#ff3232;font-size:14px;right:145px;font-weight:bold;">14.60</span>
<span class="t " style="top:510px;color:#c0c000;font-size:14px;right:79px;font-weight:bold;">23</span>
<span class="t " style="top:510px;color:#00e600;font-size:14px;left:1853px;font-weight:bold;">S</span>
<span class="t " style="top:510px;color:#808080;font-size:14px;right:27px;">2</span>
<span class="t " style="top:528px;color:#c0c0c0;font-size:14px;left:1663px;font-weight:bold;">14:53</span>
<span class="t " style="top:528px;color:#ff3232;font-size:14px;right:145px;font-weight:bold;">14.60</span>
<span class="t " style="top:528px;color:#c0c000;font-size:14px;right:79px;font-weight:bold;">5</span>
<span class="t " style="top:528px;color:#00e600;font-size:14px;left:1853px;font-weight:bold;">S</span>
<span class="t " style="top:528px;color:#808080;font-size:14px;right:27px;">1</span>
<span class="t " style="top:546px;color:#c0c0c0;font-size:14px;left:1663px;font-weight:bold;">14:53</span>
<span class="t " style="top:546px;color:#ff3232;font-size:14px;right:145px;font-weight:bold;">14.60</span>
<span class="t " style="top:546px;color:#c0c000;font-size:14px;right:79px;font-weight:bold;">2</span>
<span class="t " style="top:546px;color:#00e600;font-size:14px;left:1853px;font-weight:bold;">S</span>
<span class="t " style="top:546px;color:#808080;font-size:14px;right:27px;">1</span>
<span class="t " style="top:564px;color:#c0c0c0;font-size:14px;left:1663px;font-weight:bold;">14:53</span>
<span class="t " style="top:564px;color:#ff3232;font-size:14px;right:145px;font-weight:bold;">14.60</span>
<span class="t " style="top:564px;color:#c0c000;font-size:14px;right:79px;font-weight:bold;">2</span>
<span class="t " style="top:564px;color:#00e600;font-size:14px;left:1853px;font-weight:bold;">S</span>
<span class="t " style="top:564px;color:#808080;font-size:14px;right:27px;">1</span>
<span class="t " style="top:582px;color:#c0c0c0;font-size:14px;left:1663px;font-weight:bold;">14:54</span>
<span class="t " style="top:582px;color:#ff3232;font-size:14px;right:145px;font-weight:bold;">14.60</span>
<span class="t " style="top:582px;color:#c0c000;font-size:14px;right:79px;font-weight:bold;">2</span>
<span class="t " style="top:582px;color:#00e600;font-size:14px;left:1853px;font-weight:bold;">S</span>
<span class="t " style="top:582px;color:#808080;font-size:14px;right:27px;">1</span>
<span class="t " style="top:600px;color:#c0c0c0;font-size:14px;left:1663px;font-weight:bold;">14:54</span>
<span class="t " style="top:600px;color:#ff3232;font-size:14px;right:145px;font-weight:bold;">14.60</span>
<span class="t " style="top:600px;color:#c0c000;font-size:14px;right:79px;font-weight:bold;">20</span>
<span class="t " style="top:600px;color:#00e600;font-size:14px;left:1853px;font-weight:bold;">S</span>
<span class="t " style="top:600px;color:#808080;font-size:14px;right:27px;">1</span>
<span class="t " style="top:618px;color:#c0c0c0;font-size:14px;left:1663px;font-weight:bold;">14:54</span>
<span class="t " style="top:618px;color:#ff3232;font-size:14px;right:145px;font-weight:bold;">14.60</span>
<span class="t " style="top:618px;color:#c0c000;font-size:14px;right:79px;font-weight:bold;">69</span>
<span class="t " style="top:618px;color:#00e600;font-size:14px;left:1853px;font-weight:bold;">S</span>
<span class="t " style="top:618px;color:#808080;font-size:14px;right:27px;">2</span>
<span class="t " style="top:636px;color:#c0c0c0;font-size:14px;left:1663px;font-weight:bold;">14:54</span>
<span class="t " style="top:636px;color:#ff3232;font-size:14px;right:145px;font-weight:bold;">14.60</span>
<span class="t " style="top:636px;color:#c0c000;font-size:14px;right:79px;font-weight:bold;">6</span>
<span class="t " style="top:636px;color:#00e600;font-size:14px;left:1853px;font-weight:bold;">S</span>
<span class="t " style="top:636px;color:#808080;font-size:14px;right:27px;">1</span>
<span class="t " style="top:654px;color:#c0c0c0;font-size:14px;left:1663px;font-weight:bold;">14:54</span>
<span class="t " style="top:654px;color:#ff3232;font-size:14px;right:145px;font-weight:bold;">14.60</span>
<span class="t " style="top:654px;color:#c0c000;font-size:14px;right:79px;font-weight:bold;">16</span>
<span class="t " style="top:654px;color:#00e600;font-size:14px;left:1853px;font-weight:bold;">S</span>
<span class="t " style="top:654px;color:#808080;font-size:14px;right:27px;">1</span>
<span class="t " style="top:672px;color:#c0c0c0;font-size:14px;left:1663px;font-weight:bold;">14:54</span>
<span class="t " style="top:672px;color:#ff3232;font-size:14px;right:145px;font-weight:bold;">14.60</span>
<span class="t " style="top:672px;color:#c0c000;font-size:14px;right:79px;font-weight:bold;">3</span>
<span class="t " style="top:672px;color:#00e600;font-size:14px;left:1853px;font-weight:bold;">S</span>
<span class="t " style="top:672px;color:#808080;font-size:14px;right:27px;">1</span>
<span class="t " style="top:690px;color:#c0c0c0;font-size:14px;left:1663px;font-weight:bold;">14:54</span>
<span class="t " style="top:690px;color:#ff3232;font-size:14px;right:145px;font-weight:bold;">14.60</span>
<span class="t " style="top:690px;color:#c0c000;font-size:14px;right:79px;font-weight:bold;">2</span>
<span class="t " style="top:690px;color:#00e600;font-size:14px;left:1853px;font-weight:bold;">S</span>
<span class="t " style="top:690px;color:#808080;font-size:14px;right:27px;">1</span>
<span class="t " style="top:708px;color:#c0c0c0;font-size:14px;left:1663px;font-weight:bold;">14:54</span>
<span class="t " style="top:708px;color:#ff3232;font-size:14px;right:145px;font-weight:bold;">14.60</span>
<span class="t " style="top:708px;color:#c0c000;font-size:14px;right:79px;font-weight:bold;">7</span>
<span class="t " style="top:708px;color:#00e600;font-size:14px;left:1853px;font-weight:bold;">S</span>
<span class="t " style="top:708px;color:#808080;font-size:14px;right:27px;">1</span>
<span class="t " style="top:726px;color:#c0c0c0;font-size:14px;left:1663px;font-weight:bold;">14:54</span>
<span class="t " style="top:726px;color:#ff3232;font-size:14px;right:145px;font-weight:bold;">14.60</span>
<span class="t " style="top:726px;color:#c0c000;font-size:14px;right:79px;font-weight:bold;">9</span>
<span class="t " style="top:726px;color:#00e600;font-size:14px;left:1853px;font-weight:bold;">S</span>
<span class="t " style="top:726px;color:#808080;font-size:14px;right:27px;">2</span>
<span class="t " style="top:744px;color:#c0c0c0;font-size:14px;left:1663px;font-weight:bold;">14:55</span>
<span class="t " style="top:744px;color:#ff3232;font-size:14px;right:145px;font-weight:bold;">14.60</span>
<span class="t " style="top:744px;color:#c0c000;font-size:14px;right:79px;font-weight:bold;">1</span>
<span class="t " style="top:744px;color:#00e600;font-size:14px;left:1853px;font-weight:bold;">S</span>
<span class="t " style="top:744px;color:#808080;font-size:14px;right:27px;">1</span>
<span class="t " style="top:762px;color:#c0c0c0;font-size:14px;left:1663px;font-weight:bold;">14:55</span>
<span class="t " style="top:762px;color:#ff3232;font-size:14px;right:145px;font-weight:bold;">14.60</span>
<span class="t " style="top:762px;color:#c0c000;font-size:14px;right:79px;font-weight:bold;">217</span>
<span class="t " style="top:762px;color:#00e600;font-size:14px;left:1853px;font-weight:bold;">S</span>
<span class="t " style="top:762px;color:#808080;font-size:14px;right:27px;">1</span>
<span class="t " style="top:780px;color:#c0c0c0;font-size:14px;left:1663px;font-weight:bold;">14:55</span>
<span class="t " style="top:780px;color:#ff3232;font-size:14px;right:145px;font-weight:bold;">14.60</span>
<span class="t " style="top:780px;color:#c0c000;font-size:14px;right:79px;font-weight:bold;">14</span>
<span class="t " style="top:780px;color:#00e600;font-size:14px;left:1853px;font-weight:bold;">S</span>
<span class="t " style="top:780px;color:#808080;font-size:14px;right:27px;">2</span>
<span class="t " style="top:798px;color:#c0c0c0;font-size:14px;left:1663px;font-weight:bold;">14:55</span>
<span class="t " style="top:798px;color:#ff3232;font-size:14px;right:145px;font-weight:bold;">14.60</span>
<span class="t " style="top:798px;color:#c0c000;font-size:14px;right:79px;font-weight:bold;">11</span>
<span class="t " style="top:798px;color:#00e600;font-size:14px;left:1853px;font-weight:bold;">S</span>
<span class="t " style="top:798px;color:#808080;font-size:14px;right:27px;">2</span>
<span class="t " style="top:816px;color:#c0c0c0;font-size:14px;left:1663px;font-weight:bold;">14:55</span>
<span class="t " style="top:816px;color:#ff3232;font-size:14px;right:145px;font-weight:bold;">14.60</span>
<span class="t " style="top:816px;color:#c0c000;font-size:14px;right:79px;font-weight:bold;">1</span>
<span class="t " style="top:816px;color:#00e600;font-size:14px;left:1853px;font-weight:bold;">S</span>
<span class="t " style="top:816px;color:#808080;font-size:14px;right:27px;">1</span>
<span class="t " style="top:834px;color:#c0c0c0;font-size:14px;left:1663px;font-weight:bold;">14:55</span>
<span class="t " style="top:834px;color:#ff3232;font-size:14px;right:145px;font-weight:bold;">14.60</span>
<span class="t " style="top:834px;color:#c0c000;font-size:14px;right:79px;font-weight:bold;">3</span>
<span class="t " style="top:834px;color:#00e600;font-size:14px;left:1853px;font-weight:bold;">S</span>
<span class="t " style="top:834px;color:#808080;font-size:14px;right:27px;">1</span>
<span class="t " style="top:852px;color:#c0c0c0;font-size:14px;left:1663px;font-weight:bold;">14:56</span>
<span class="t " style="top:852px;color:#ff3232;font-size:14px;right:145px;font-weight:bold;">14.60</span>
<span class="t " style="top:852px;color:#c0c000;font-size:14px;right:79px;font-weight:bold;">2</span>
<span class="t " style="top:852px;color:#00e600;font-size:14px;left:1853px;font-weight:bold;">S</span>
<span class="t " style="top:852px;color:#808080;font-size:14px;right:27px;">1</span>
<span class="t " style="top:870px;color:#c0c0c0;font-size:14px;left:1663px;font-weight:bold;">14:56</span>
<span class="t " style="top:870px;color:#ff3232;font-size:14px;right:145px;font-weight:bold;">14.60</span>
<span class="t " style="top:870px;color:#c0c000;font-size:14px;right:79px;font-weight:bold;">5</span>
<span class="t " style="top:870px;color:#00e600;font-size:14px;left:1853px;font-weight:bold;">S</span>
<span class="t " style="top:870px;color:#808080;font-size:14px;right:27px;">1</span>
<span class="t " style="top:888px;color:#c0c0c0;font-size:14px;left:1663px;font-weight:bold;">14:56</span>
<span class="t " style="top:888px;color:#ff3232;font-size:14px;right:145px;font-weight:bold;">14.60</span>
<span class="t " style="top:888px;color:#c0c000;font-size:14px;right:79px;font-weight:bold;">10</span>
<span class="t " style="top:888px;color:#00e600;font-size:14px;left:1853px;font-weight:bold;">S</span>
<span class="t " style="top:888px;color:#808080;font-size:14px;right:27px;">1</span>
<span class="t " style="top:906px;color:#c0c0c0;font-size:14px;left:1663px;font-weight:bold;">14:56</span>
<span class="t " style="top:906px;color:#ff3232;font-size:14px;right:145px;font-weight:bold;">14.60</span>
<span class="t " style="top:906px;color:#c0c000;font-size:14px;right:79px;font-weight:bold;">16</span>
<span class="t " style="top:906px;color:#00e600;font-size:14px;left:1853px;font-weight:bold;">S</span>
<span class="t " style="top:906px;color:#808080;font-size:14px;right:27px;">2</span>
<span class="t " style="top:924px;color:#c0c0c0;font-size:14px;left:1663px;font-weight:bold;">14:56</span>
<span class="t " style="top:924px;color:#ff3232;font-size:14px;right:145px;font-weight:bold;">14.60</span>
<span class="t " style="top:924px;color:#c0c000;font-size:14px;right:79px;font-weight:bold;">1</span>
<span class="t " style="top:924px;color:#00e600;font-size:14px;left:1853px;font-weight:bold;">S</span>
<span class="t " style="top:924px;color:#808080;font-size:14px;right:27px;">1</span>
<span class="t " style="top:942px;color:#c0c0c0;font-size:14px;left:1663px;font-weight:bold;">14:57</span>
<span class="t " style="top:942px;color:#ff3232;font-size:14px;right:145px;font-weight:bold;">14.60</span>
<span class="t " style="top:942px;color:#c0c000;font-size:14px;right:79px;font-weight:bold;">6</span>
<span class="t " style="top:942px;color:#00e600;font-size:14px;left:1853px;font-weight:bold;">S</span>
<span class="t " style="top:942px;color:#808080;font-size:14px;right:27px;">1</span>
<span class="t " style="top:960px;color:#c0c0c0;font-size:14px;left:1663px;font-weight:bold;">15:00</span>
<span class="t " style="top:960px;color:#ff3232;font-size:14px;right:145px;font-weight:bold;">14.60</span>
<span class="t " style="top:960px;color:#c0c000;font-size:14px;right:79px;font-weight:bold;">427</span>
<span class="t " style="top:960px;color:#808080;font-size:14px;right:27px;">24</span>
<div class="r" style="left:1662px;top:977px;width:233px;height:1px;background:#b00000;"></div>
<span class="t " style="top:980px;color:#30e0e0;font-size:12px;left:1662px;width:28px;text-align:center;">笔</span>
<div class="r" style="left:1690px;top:978px;width:1px;height:17px;background:#b00000;"></div>
<span class="t " style="top:980px;color:#c0c0c0;font-size:12px;left:1691px;width:28px;text-align:center;">价</span>
<div class="r" style="left:1719px;top:978px;width:1px;height:17px;background:#b00000;"></div>
<span class="t " style="top:980px;color:#c0c0c0;font-size:12px;left:1720px;width:28px;text-align:center;">细</span>
<div class="r" style="left:1748px;top:978px;width:1px;height:17px;background:#b00000;"></div>
<span class="t " style="top:980px;color:#c0c0c0;font-size:12px;left:1749px;width:28px;text-align:center;">势</span>
<div class="r" style="left:1777px;top:978px;width:1px;height:17px;background:#b00000;"></div>
<span class="t " style="top:980px;color:#c0c0c0;font-size:12px;left:1778px;width:28px;text-align:center;">联</span>
<div class="r" style="left:1806px;top:978px;width:1px;height:17px;background:#b00000;"></div>
<span class="t " style="top:980px;color:#c0c0c0;font-size:12px;left:1807px;width:28px;text-align:center;">值</span>
<div class="r" style="left:1835px;top:978px;width:1px;height:17px;background:#b00000;"></div>
<span class="t " style="top:980px;color:#c0c0c0;font-size:12px;left:1836px;width:28px;text-align:center;">主</span>
<div class="r" style="left:1864px;top:978px;width:1px;height:17px;background:#b00000;"></div>
<span class="t " style="top:980px;color:#c0c0c0;font-size:12px;left:1865px;width:28px;text-align:center;">筹</span>
<div class="r" style="left:1662px;top:995px;width:233px;height:1px;background:#b00000;"></div>
<div class="r" style="left:1895px;top:31px;width:25px;height:1009px;background:#f0f0f0;"></div>
<div class="r" style="left:1895px;top:31px;width:1px;height:1009px;background:#fafafa;"></div>
<svg class="r" style="left:1898px;top:34px" width="18" height="16" viewBox="0 0 18 16"><g transform="rotate(0 9 8)"><path d="M2 8 L8 2.5 V5.5 H15.5 V10.5 H8 V13.5 Z" fill="#fff" stroke="#1a50d0" stroke-width="1.2"/></g></svg>
<svg class="r" style="left:1898px;top:57px" width="18" height="16" viewBox="0 0 18 16"><g transform="rotate(90 9 8)"><path d="M2 8 L8 2.5 V5.5 H15.5 V10.5 H8 V13.5 Z" fill="#fff" stroke="#1a50d0" stroke-width="1.2"/></g></svg>
<svg class="r" style="left:1898px;top:80px" width="18" height="16" viewBox="0 0 18 16"><g transform="rotate(-90 9 8)"><path d="M2 8 L8 2.5 V5.5 H15.5 V10.5 H8 V13.5 Z" fill="#fff" stroke="#1a50d0" stroke-width="1.2"/></g></svg>
<svg class="r" style="left:1898px;top:103px" width="18" height="16" viewBox="0 0 18 16"><rect x="2" y="1.500" width="14.500" height="13" fill="#fff" stroke="#1a50d0" stroke-width="1.100"/><path d="M3 4H8M3 6.5H8M3 9H8" stroke="#00a000" stroke-width="1.2"/><path d="M10 4H15M10 6.5H15" stroke="#e00000" stroke-width="1.2"/><circle cx="13" cy="11" r="3.3" fill="#ddd" stroke="#777"/><path d="M11.5 11l1.2 1.2l2-2.4" stroke="#555" fill="none"/></svg>
<svg class="r" style="left:1898px;top:126px" width="18" height="16" viewBox="0 0 18 16"><rect x="2" y="1.500" width="14.500" height="13" fill="#fff" stroke="#1a50d0" stroke-width="1.100"/><path d="M4 3V13M7 3V13" stroke="#e00000" stroke-width="2" stroke-dasharray="1.5 1"/><path d="M10 3V13" stroke="#00a000" stroke-width="2" stroke-dasharray="1.5 1"/><path d="M13.5 3V13" stroke="#0000e0" stroke-width="2" stroke-dasharray="1.5 1"/></svg>
<svg class="r" style="left:1898px;top:149px" width="18" height="16" viewBox="0 0 18 16"><rect x="2" y="1.500" width="14.500" height="13" fill="#fff" stroke="#1a50d0" stroke-width="1.100"/><path d="M2.5 11 L6 8 L9 10 L12 5.5 L15.5 4" stroke="#e00000" stroke-width="1.5" fill="none"/></svg>
<svg class="r" style="left:1898px;top:172px" width="18" height="16" viewBox="0 0 18 16"><rect x="2" y="1.500" width="14.500" height="13" fill="#fff" stroke="#1a50d0" stroke-width="1.100"/><path d="M5 4V13" stroke="#e00000"/><rect x="3.5" y="6" width="3" height="5" fill="#e00000"/><path d="M9 5V12" stroke="#00a000"/><rect x="7.5" y="7" width="3" height="4" fill="#00a000"/><path d="M13 2.5V12" stroke="#e00000"/><rect x="11.5" y="4" width="3" height="5" fill="#e00000"/></svg>
<svg class="r" style="left:1898px;top:195px" width="18" height="16" viewBox="0 0 18 16"><rect x="5" y="1" width="12" height="9" fill="#fff" stroke="#1a50d0"/><rect x="1" y="5" width="13" height="10" fill="#fff" stroke="#1a50d0" stroke-width="1.2"/><path d="M3 8.5H7M8.5 8.5H12M3 11.5H7M8.5 11.5H12" stroke="#333" stroke-width="1.2"/></svg>
<svg class="r" style="left:1898px;top:218px" width="18" height="16" viewBox="0 0 18 16"><rect x="2" y="1.500" width="14.500" height="13" fill="#fff" stroke="#1a50d0" stroke-width="1.100"/><text x="9" y="12" font-size="9" fill="#1a50d0" text-anchor="middle" font-family="Liberation Sans,sans-serif" y="11.5">F10</text></svg>
<svg class="r" style="left:1898px;top:241px" width="18" height="16" viewBox="0 0 18 16"><rect x="2" y="1.500" width="14.500" height="13" fill="#fff" stroke="#1a50d0" stroke-width="1.100"/><rect x="3.5" y="3" width="5" height="3" fill="#ffc020" stroke="#c08000" stroke-width=".6"/><rect x="9" y="6.5" width="5" height="3" fill="#ffc020" stroke="#c08000" stroke-width=".6"/><rect x="9" y="10.5" width="5" height="3" fill="#ffc020" stroke="#c08000" stroke-width=".6"/><path d="M6 6V12H9M6 8H9" stroke="#3060c0" fill="none" stroke-width=".8"/></svg>
<svg class="r" style="left:1898px;top:264px" width="18" height="16" viewBox="0 0 18 16"><rect x="2" y="1.500" width="14.500" height="13" fill="#fff" stroke="#1a50d0" stroke-width="1.100"/><text x="9" y="12.5" font-size="11" font-weight="bold" fill="#f07820" text-anchor="middle" font-family="WenQuanYi Zen Hei,sans-serif">自</text></svg>
<svg class="r" style="left:1898px;top:287px" width="18" height="16" viewBox="0 0 18 16"><rect x="2" y="1.500" width="14.500" height="13" fill="#fff" stroke="#1a50d0" stroke-width="1.100"/><text x="9" y="12" font-size="9" fill="#1a50d0" text-anchor="middle" font-family="Liberation Sans,sans-serif">F12</text></svg>
<svg class="r" style="left:1898px;top:310px" width="18" height="16" viewBox="0 0 18 16"><rect x="1" y="1" width="16" height="14" rx="4" fill="#fff" stroke="#208070" stroke-width="1.2"/><text x="9" y="12" font-size="10" font-style="italic" fill="#1a50d0" text-anchor="middle" font-family="Liberation Serif,serif">f(x)</text></svg>
<svg class="r" style="left:1898px;top:333px" width="18" height="16" viewBox="0 0 18 16"><rect x="2" y="1.500" width="14.500" height="13" fill="#fff" stroke="#1a50d0" stroke-width="1.100"/><circle cx="9" cy="8" r="3.3" fill="none" stroke="#1a50d0" stroke-width="1.4"/></svg>
<div class="r" style="left:1899px;top:356px;width:17px;height:1px;background:#a0a0a0;"></div>
<svg class="r" style="left:1898px;top:364.5px" width="18" height="16" viewBox="0 0 18 16"><rect x="2" y="1.500" width="14.500" height="13" fill="#fff" stroke="#1a50d0" stroke-width="1.100"/><path d="M3 6 l2-2l2 2l2-2l2 2l2-2l2 2" stroke="#e00000" fill="none"/><path d="M3 11 l2-2l2 2l2-2l2 2l2-2l2 2" stroke="#0000e0" fill="none"/></svg>
<svg class="r" style="left:1898px;top:386px" width="18" height="16" viewBox="0 0 18 16"><text x="9" y="12.5" font-size="12" font-weight="bold" fill="#2838c8" text-anchor="middle" font-family="Liberation Sans,sans-serif" letter-spacing="-0.6">RSI</text></svg>
<svg class="r" style="left:1898px;top:410px" width="18" height="16" viewBox="0 0 18 16"><path d="M9 0.5l4 3.5h-8z" fill="#d03030"/><text x="9" y="15.5" font-size="14" font-weight="bold" fill="#c02020" text-anchor="middle" font-family="Liberation Sans,sans-serif">S</text></svg>
<svg class="r" style="left:1898px;top:433px" width="18" height="16" viewBox="0 0 18 16"><path d="M9 1l2.6 3h-5.2zM9 15l2.6-3h-5.2zM1.5 8l3-2.6v5.2zM16.5 8l-3-2.6v5.2z" fill="#1a50d0"/><circle cx="9" cy="8" r="1.8" fill="#1a50d0"/><path d="M9 3V13M4 8H14" stroke="#1a50d0" stroke-width="1.2"/></svg>
<svg class="r" style="left:1898px;top:456px" width="18" height="16" viewBox="0 0 18 16"><path d="M3 14.5 L4.5 10 L13 2 L16 5 L7.5 13 Z" fill="#f0a030" stroke="#a06010" stroke-width=".7"/><path d="M3 14.5L4.5 10L7.5 13Z" fill="#e8d0a0"/><path d="M13 2L16 5L14.7 6.3L11.7 3.3Z" fill="#d04040"/></svg>
<div class="r" style="left:1899px;top:479px;width:17px;height:1px;background:#a0a0a0;"></div>
<svg class="r" style="left:1898px;top:487px" width="18" height="16" viewBox="0 0 18 16"><rect x="2" y="1.500" width="14.500" height="13" fill="#fff" stroke="#1a50d0" stroke-width="1.100"/><text x="9" y="12" font-size="9.500" fill="#1a50d0" text-anchor="middle" font-family="Liberation Sans,sans-serif">FS</text></svg>
<svg class="r" style="left:1898px;top:510px" width="18" height="16" viewBox="0 0 18 16"><rect x="2" y="1.500" width="14.500" height="13" fill="#fff" stroke="#1a50d0" stroke-width="1.100"/><path d="M4.5 8a4.5 4 0 0 1 8-2l1-1v3.5h-3.5l1.2-1.2a3 2.6 0 0 0-5 .9zM13.5 8.5a4.5 4 0 0 1-8 2l-1 1v-3.5h3.5l-1.2 1.2a3 2.6 0 0 0 5-.9z" fill="#40b040"/></svg>
<span class="t " style="top:534px;color:#1a3aa0;font-size:12px;left:1896px;width:20px;text-align:center;">1</span>
<span class="t " style="top:557px;color:#1a3aa0;font-size:12px;left:1896px;width:20px;text-align:center;">5</span>
<span class="t " style="top:580px;color:#1a3aa0;font-size:12px;left:1896px;width:22px;text-align:center;">15</span>
<span class="t " style="top:603px;color:#1a3aa0;font-size:12px;left:1896px;width:22px;text-align:center;">30</span>
<span class="t " style="top:626px;color:#1a3aa0;font-size:12px;left:1896px;width:22px;text-align:center;">60</span>
<div class="r" style="left:1913px;top:537px;width:6px;height:52px;background:#303040;border-radius:2px;border:1px solid #808080;box-sizing:border-box;"></div>
<div class="r" style="left:1914px;top:574px;width:4px;height:14px;background:#20d8d8;"></div>
<div class="r" style="left:1897px;top:645px;width:22px;height:22px;background:#f8f8f8;border-left:1px solid #a0a0a0;border-top:1px solid #a0a0a0;box-sizing:border-box;"></div>
<span class="t " style="top:650px;color:#1a3aa0;font-size:13px;left:1897px;width:22px;text-align:center;">日</span>
<span class="t " style="top:673px;color:#1a3aa0;font-size:13px;left:1897px;width:22px;text-align:center;">周</span>
<span class="t " style="top:696px;color:#1a3aa0;font-size:13px;left:1897px;width:22px;text-align:center;">月</span>
<span class="t " style="top:719px;color:#1a3aa0;font-size:13px;left:1897px;width:22px;text-align:center;">N</span>
<span class="t " style="top:742px;color:#1a3aa0;font-size:13px;left:1897px;width:22px;text-align:center;">多</span>
<span class="t " style="top:764px;color:#1a3aa0;font-size:13px;left:1897px;width:22px;text-align:center;">季</span>
<span class="t " style="top:787px;color:#1a3aa0;font-size:13px;left:1897px;width:22px;text-align:center;">年</span>
<div class="r" style="left:0px;top:944px;width:1661px;height:1px;background:#b00000;"></div>
<div class="r" style="left:0px;top:960px;width:1661px;height:1px;background:#b00000;"></div>
<div class="r" style="left:0px;top:977px;width:1661px;height:1px;background:#b00000;"></div>
<div class="r" style="left:0px;top:995px;width:1661px;height:1px;background:#b00000;"></div>
<div class="r" style="left:0px;top:945px;width:1px;height:50px;background:#b00000;"></div>
<span class="t " style="top:946px;color:#ff3232;font-size:12px;left:5px;">2020年</span>
<div class="r" style="left:52px;top:945px;width:1px;height:15px;background:#b00000;"></div>
<span class="t " style="top:946px;color:#ff3232;font-size:12px;left:54px;">7</span>
<span class="t " style="top:946px;color:#ff3232;font-size:12px;left:333px;">8</span>
<span class="t " style="top:946px;color:#ff3232;font-size:12px;left:587px;">9</span>
<span class="t " style="top:946px;color:#ff3232;font-size:12px;left:853px;">10</span>
<span class="t " style="top:946px;color:#ff3232;font-size:12px;left:1047px;">11</span>
<span class="t " style="top:946px;color:#ff3232;font-size:12px;left:1301px;">12</span>
<div class="r" style="left:331px;top:945px;width:1px;height:15px;background:#b00000;"></div>
<div class="r" style="left:585px;top:945px;width:1px;height:15px;background:#b00000;"></div>
<div class="r" style="left:851px;top:945px;width:1px;height:15px;background:#b00000;"></div>
<div class="r" style="left:1045px;top:945px;width:1px;height:15px;background:#b00000;"></div>
<div class="r" style="left:1299px;top:945px;width:1px;height:15px;background:#b00000;"></div>
<div class="r" style="left:122px;top:945px;width:1px;height:3px;background:#b00000;"></div>
<div class="r" style="left:192px;top:945px;width:1px;height:3px;background:#b00000;"></div>
<div class="r" style="left:261px;top:945px;width:1px;height:3px;background:#b00000;"></div>
<div class="r" style="left:395px;top:945px;width:1px;height:3px;background:#b00000;"></div>
<div class="r" style="left:459px;top:945px;width:1px;height:3px;background:#b00000;"></div>
<div class="r" style="left:523px;top:945px;width:1px;height:3px;background:#b00000;"></div>
<div class="r" style="left:651px;top:945px;width:1px;height:3px;background:#b00000;"></div>
<div class="r" style="left:720px;top:945px;width:1px;height:3px;background:#b00000;"></div>
<div class="r" style="left:788px;top:945px;width:1px;height:3px;background:#b00000;"></div>
<div class="r" style="left:900px;top:945px;width:1px;height:3px;background:#b00000;"></div>
<div class="r" style="left:949px;top:945px;width:1px;height:3px;background:#b00000;"></div>
<div class="r" style="left:997px;top:945px;width:1px;height:3px;background:#b00000;"></div>
<div class="r" style="left:1110px;top:945px;width:1px;height:3px;background:#b00000;"></div>
<div class="r" style="left:1172px;top:945px;width:1px;height:3px;background:#b00000;"></div>
<div class="r" style="left:1237px;top:945px;width:1px;height:3px;background:#b00000;"></div>
<div class="r" style="left:1366px;top:945px;width:1px;height:3px;background:#b00000;"></div>
<div class="r" style="left:1430px;top:945px;width:1px;height:3px;background:#b00000;"></div>
<div class="r" style="left:1494px;top:945px;width:1px;height:3px;background:#b00000;"></div>
<div class="r" style="left:1558px;top:945px;width:1px;height:3px;background:#b00000;"></div>
<span class="t " style="top:946px;color:#c0c0c0;font-size:12px;left:1611px;width:50px;text-align:center;">日线</span>
<div class="r" style="left:1610px;top:945px;width:1px;height:50px;background:#b00000;"></div>
<div class="r" style="left:0px;top:961px;width:1px;height:16px;background:#b00000;"></div>
<span class="t " style="top:963px;color:#c0c0c0;font-size:12px;left:1px;width:35px;text-align:center;">指标A</span>
<div class="r" style="left:36px;top:961px;width:1px;height:16px;background:#b00000;"></div>
<span class="t " style="top:963px;color:#c0c0c0;font-size:12px;left:37px;width:30px;text-align:center;">窗口</span>
<div class="r" style="left:67px;top:961px;width:1px;height:16px;background:#b00000;"></div>
<span class="t " style="top:963px;color:#c0c0c0;font-size:12px;left:68px;width:43px;text-align:center;">四色谱</span>
<div class="r" style="left:111px;top:961px;width:1px;height:16px;background:#b00000;"></div>
<span class="t " style="top:963px;color:#c0c0c0;font-size:12px;left:112px;width:55px;text-align:center;">中期方向</span>
<div class="r" style="left:167px;top:961px;width:1px;height:16px;background:#b00000;"></div>
<span class="t " style="top:963px;color:#c0c0c0;font-size:12px;left:168px;width:55px;text-align:center;">麟龙四里</span>
<div class="r" style="left:223px;top:961px;width:1px;height:16px;background:#b00000;"></div>
<span class="t " style="top:963px;color:#c0c0c0;font-size:12px;left:224px;width:31px;text-align:center;">冲天</span>
<div class="r" style="left:255px;top:961px;width:1px;height:16px;background:#b00000;"></div>
<span class="t " style="top:963px;color:#c0c0c0;font-size:12px;left:256px;width:43px;text-align:center;">八旗兵</span>
<div class="r" style="left:299px;top:961px;width:1px;height:16px;background:#b00000;"></div>
<span class="t " style="top:963px;color:#c0c0c0;font-size:12px;left:300px;width:31px;text-align:center;">均线</span>
<div class="r" style="left:331px;top:961px;width:1px;height:16px;background:#b00000;"></div>
<span class="t " style="top:963px;color:#c0c0c0;font-size:12px;left:332px;width:55px;text-align:center;">财神送宝</span>
<div class="r" style="left:387px;top:961px;width:1px;height:16px;background:#b00000;"></div>
<span class="t " style="top:963px;color:#c0c0c0;font-size:12px;left:388px;width:55px;text-align:center;">黄金满堂</span>
<div class="r" style="left:443px;top:961px;width:1px;height:16px;background:#b00000;"></div>
<span class="t " style="top:963px;color:#c0c0c0;font-size:12px;left:444px;width:55px;text-align:center;">超准买卖</span>
<div class="r" style="left:499px;top:961px;width:1px;height:16px;background:#b00000;"></div>
<span class="t " style="top:963px;color:#c0c0c0;font-size:12px;left:500px;width:37px;text-align:center;">A牛股</span>
<div class="r" style="left:537px;top:961px;width:1px;height:16px;background:#b00000;"></div>
<span class="t " style="top:963px;color:#c0c0c0;font-size:12px;left:538px;width:56px;text-align:center;">四目看图</span>
<div class="r" style="left:594px;top:961px;width:1px;height:16px;background:#b00000;"></div>
<span class="t " style="top:963px;color:#c0c0c0;font-size:12px;left:595px;width:55px;text-align:center;">逃顶专用</span>
<div class="r" style="left:650px;top:961px;width:1px;height:16px;background:#b00000;"></div>
<span class="t " style="top:963px;color:#c0c0c0;font-size:12px;left:651px;width:43px;text-align:center;">最贵顶</span>
<div class="r" style="left:694px;top:961px;width:1px;height:16px;background:#b00000;"></div>
<span class="t " style="top:963px;color:#c0c0c0;font-size:12px;left:695px;width:52px;text-align:center;">两色K线</span>
<div class="r" style="left:747px;top:961px;width:1px;height:16px;background:#b00000;"></div>
<span class="t " style="top:963px;color:#c0c0c0;font-size:12px;left:748px;width:79px;text-align:center;">财神送宝副图</span>
<div class="r" style="left:827px;top:961px;width:1px;height:16px;background:#b00000;"></div>
<span class="t " style="top:963px;color:#c0c0c0;font-size:12px;left:828px;width:43px;text-align:center;">迎财神</span>
<div class="r" style="left:871px;top:961px;width:1px;height:16px;background:#b00000;"></div>
<span class="t " style="top:963px;color:#c0c0c0;font-size:12px;left:872px;width:31px;text-align:center;">超级</span>
<div class="r" style="left:903px;top:961px;width:1px;height:16px;background:#b00000;"></div>
<span class="t " style="top:963px;color:#c0c0c0;font-size:12px;left:904px;width:38px;text-align:center;">超级1</span>
<div class="r" style="left:942px;top:961px;width:1px;height:16px;background:#b00000;"></div>
<span class="t " style="top:963px;color:#30e0e0;font-size:12px;left:943px;width:37px;text-align:center;">超级2</span>
<div class="r" style="left:980px;top:961px;width:1px;height:16px;background:#b00000;"></div>
<span class="t " style="top:963px;color:#c0c0c0;font-size:12px;left:981px;width:38px;text-align:center;">超级3</span>
<div class="r" style="left:1019px;top:961px;width:1px;height:16px;background:#b00000;"></div>
<span class="t " style="top:963px;color:#c0c0c0;font-size:12px;left:1020px;width:38px;text-align:center;">超级4</span>
<div class="r" style="left:1058px;top:961px;width:1px;height:16px;background:#b00000;"></div>
<span class="t " style="top:963px;color:#c0c0c0;font-size:12px;left:1059px;width:31px;text-align:center;">买点</span>
<div class="r" style="left:1090px;top:961px;width:1px;height:16px;background:#b00000;"></div>
<span class="t " style="top:963px;color:#c0c0c0;font-size:12px;left:1091px;width:43px;text-align:center;">暴涨牛</span>
<div class="r" style="left:1134px;top:961px;width:1px;height:16px;background:#b00000;"></div>
<span class="t " style="top:963px;color:#c0c0c0;font-size:12px;left:1135px;width:55px;text-align:center;">金牌抄底</span>
<div class="r" style="left:1190px;top:961px;width:1px;height:16px;background:#b00000;"></div>
<span class="t " style="top:963px;color:#c0c0c0;font-size:12px;left:1191px;width:55px;text-align:center;">牛人专用</span>
<div class="r" style="left:1246px;top:961px;width:1px;height:16px;background:#b00000;"></div>
<span class="t " style="top:963px;color:#c0c0c0;font-size:12px;left:1247px;width:43px;text-align:center;">横财神</span>
<div class="r" style="left:1290px;top:961px;width:1px;height:16px;background:#b00000;"></div>
<span class="t " style="top:963px;color:#c0c0c0;font-size:12px;left:1291px;width:55px;text-align:center;">量能平台</span>
<div class="r" style="left:1346px;top:961px;width:1px;height:16px;background:#b00000;"></div>
<span class="t " style="top:963px;color:#c0c0c0;font-size:12px;left:1347px;width:55px;text-align:center;">主力吸筹</span>
<div class="r" style="left:1402px;top:961px;width:1px;height:16px;background:#b00000;"></div>
<span class="t " style="top:963px;color:#c0c0c0;font-size:12px;left:1403px;width:43px;text-align:center;">起爆点</span>
<div class="r" style="left:1446px;top:961px;width:1px;height:16px;background:#b00000;"></div>
<span class="t " style="top:963px;color:#c0c0c0;font-size:12px;left:1447px;width:43px;text-align:center;">火焰山</span>
<div class="r" style="left:1490px;top:961px;width:1px;height:16px;background:#b00000;"></div>
<span class="t " style="top:963px;color:#c0c0c0;font-size:12px;left:1491px;width:14px;text-align:center;">&gt;</span>
<div class="r" style="left:1539px;top:961px;width:1px;height:16px;background:#b00000;"></div>
<span class="t " style="top:963px;color:#c0c0c0;font-size:12px;left:1540px;width:35px;text-align:center;">指标B</span>
<div class="r" style="left:1575px;top:961px;width:1px;height:16px;background:#b00000;"></div>
<span class="t " style="top:963px;color:#c0c0c0;font-size:12px;left:1576px;width:34px;text-align:center;">模 板</span>
<div class="r" style="left:1610px;top:961px;width:1px;height:16px;background:#b00000;"></div>
<span class="t " style="top:963px;color:#c0c0c0;font-size:12px;left:1611px;width:24px;text-align:center;">+</span>
<div class="r" style="left:1635px;top:961px;width:1px;height:16px;background:#b00000;"></div>
<span class="t " style="top:963px;color:#c0c0c0;font-size:12px;left:1636px;width:25px;text-align:center;">−</span>
<div class="r" style="left:1505px;top:961px;width:1px;height:16px;background:#b00000;"></div>
<div class="r" style="left:0px;top:978px;width:1px;height:17px;background:#b00000;"></div>
<span class="t " style="top:980px;color:#c0c0c0;font-size:12px;left:1px;width:42px;text-align:center;">扩展∧</span>
<div class="r" style="left:43px;top:978px;width:1px;height:17px;background:#b00000;"></div>
<span class="t " style="top:980px;color:#c0c0c0;font-size:12px;left:44px;width:55px;text-align:center;">关联报价</span>
<div class="r" style="left:99px;top:978px;width:1px;height:17px;background:#b00000;"></div>
<span class="t " style="top:980px;color:#d0d000;font-size:12px;left:100px;width:55px;text-align:center;">综合资讯</span>
<div class="r" style="left:155px;top:978px;width:1px;height:17px;background:#b00000;"></div>
<span class="t " style="top:980px;color:#d0d000;font-size:12px;left:156px;width:55px;text-align:center;">行业资讯</span>
<div class="r" style="left:211px;top:978px;width:1px;height:17px;background:#b00000;"></div>
<div class="r" style="left:1562px;top:978px;width:1px;height:17px;background:#b00000;"></div>
<span class="t " style="top:980px;color:#d0d000;font-size:12px;left:1563px;width:47px;text-align:center;">图文F10</span>
<span class="t " style="top:980px;color:#d0d000;font-size:12px;left:1611px;width:50px;text-align:center;">侧边栏《</span>
<div class="r" style="left:0px;top:996px;width:1895px;height:22px;background:#31343d;"></div>
<span class="t " style="top:1001px;color:#f0f0f0;font-size:12px;left:-2px;letter-spacing:.3px;">20.12.31)</span>
<span class="t " style="top:1001px;color:#f0f0f0;font-size:12px;left:93px;letter-spacing:.3px;">[其他提示]国内期市交易所提示(2020.12.31)</span>
<span class="t " style="top:1001px;color:#f0f0f0;font-size:12px;left:373px;letter-spacing:.3px;">[主力动向]深市涨跌幅超过7%的证券(2020.12.31)</span>
<span class="t " style="top:1001px;color:#f0f0f0;font-size:12px;left:677px;letter-spacing:.3px;">[临时停牌]N西大门(605155)盘中临时停牌</span>
<span class="t " style="top:1001px;color:#f0f0f0;font-size:12px;left:939px;letter-spacing:.3px;">[临时停牌]N火星人(300894)盘中临时停牌</span>
<span class="t " style="top:1001px;color:#f0f0f0;font-size:12px;left:1201px;letter-spacing:.3px;">[今日特别提示]今日特别提示</span>
<span class="t " style="top:1001px;color:#f0f0f0;font-size:12px;left:1397px;letter-spacing:.3px;">[深交所公告]深市上市公司公告(2020.12.31)</span>
<span class="t " style="top:1001px;color:#f0f0f0;font-size:12px;left:1689px;letter-spacing:.3px;">[上交所公告]沪市上市公司公告(2020.</span>
<div class="r" style="left:0px;top:1018px;width:1895px;height:22px;background:#171c20;"></div>
<svg class="r" style="left:7px;top:1022px" width="13" height="13" viewBox="0 0 13 13"><circle cx="6.5" cy="6.5" r="6.3" fill="#7a8098"/><path d="M3.5 5.5l3 3l3-3" fill="none" stroke="#2a2e3c" stroke-width="1.2"/></svg>
<span class="t " style="top:1024px;color:#f0f0f0;font-size:12px;left:26px;">上证</span>
<span class="t " style="top:1024px;color:#ff4848;font-size:12px;left:55px;">3473.07</span>
<span class="t " style="top:1024px;color:#ff4848;font-size:12px;left:112px;">58.62</span>
<span class="t " style="top:1024px;color:#ff4848;font-size:12px;left:153px;">1.72%</span>
<span class="t " style="top:1024px;color:#f0f0f0;font-size:12px;left:197px;">4505亿</span>
<span class="t " style="top:1024px;color:#f0f0f0;font-size:12px;left:245px;">深证</span>
<span class="t " style="top:1024px;color:#ff4848;font-size:12px;left:274px;">14470.7</span>
<span class="t " style="top:1024px;color:#ff4848;font-size:12px;left:328px;">269.11</span>
<span class="t " style="top:1024px;color:#ff4848;font-size:12px;left:372px;">1.89%</span>
<span class="t " style="top:1024px;color:#f0f0f0;font-size:12px;left:416px;">5113亿</span>
<span class="t " style="top:1024px;color:#f0f0f0;font-size:12px;left:465px;">中小</span>
<span class="t " style="top:1024px;color:#ff4848;font-size:12px;left:494px;">9545.18</span>
<span class="t " style="top:1024px;color:#ff4848;font-size:12px;left:547px;">173.18</span>
<span class="t " style="top:1024px;color:#ff4848;font-size:12px;left:592px;">1.85%</span>
<span class="t " style="top:1024px;color:#f0f0f0;font-size:12px;left:636px;">2075亿</span>
<span class="t " style="top:1024px;color:#f0f0f0;font-size:12px;left:685px;">沪深</span>
<span class="t " style="top:1024px;color:#ff4848;font-size:12px;left:714px;">5211.29</span>
<span class="t " style="top:1024px;color:#ff4848;font-size:12px;left:771px;">97.58</span>
<span class="t " style="top:1024px;color:#ff4848;font-size:12px;left:812px;">1.91%</span>
<span class="t " style="top:1024px;color:#f0f0f0;font-size:12px;left:856px;">3587亿</span>
<span class="t " style="top:1024px;color:#f0f0f0;font-size:12px;left:905px;">创业</span>
<span class="t " style="top:1024px;color:#ff4848;font-size:12px;left:934px;">2966.26</span>
<span class="t " style="top:1024px;color:#ff4848;font-size:12px;left:991px;">65.72</span>
<span class="t " style="top:1024px;color:#ff4848;font-size:12px;left:1032px;">2.27%</span>
<span class="t " style="top:1024px;color:#f0f0f0;font-size:12px;left:1076px;">1793亿</span>
<svg class="r" style="left:1128px;top:1023px" width="50" height="14" viewBox="0 0 50 14"><rect x=".5" y=".5" width="49" height="6" fill="none" stroke="#f0f0f0"/><rect x="14.5" y="1" width="9.5" height="5" fill="#ff0000"/><rect x="24" y="1" width="10" height="5" fill="#008000"/><path d="M12.5 0V7" stroke="#f0f0f0"/><path d="M37.5 0V7" stroke="#f0f0f0"/><rect x="4" y="8" width="6" height="1.600" fill="#008000"/><rect x="4" y="11.200" width="6" height="1.600" fill="#008000"/><rect x="12" y="8" width="6" height="1.600" fill="#008000"/><rect x="12" y="11.200" width="6" height="1.600" fill="#008000"/><rect x="20" y="8" width="6" height="1.600" fill="#008000"/><rect x="20" y="11.200" width="6" height="1.600" fill="#008000"/><rect x="28" y="8" width="6" height="1.600" fill="#008000"/><rect x="28" y="11.200" width="6" height="1.600" fill="#008000"/><rect x="36" y="8" width="6" height="1.600" fill="#008000"/><rect x="36" y="11.200" width="6" height="1.600" fill="#008000"/><rect x="44" y="8" width="6" height="1.600" fill="#008000"/><rect x="44" y="11.200" width="6" height="1.600" fill="#008000"/></svg>
<svg class="r" style="left:1180px;top:1023px" width="50" height="14" viewBox="0 0 50 14"><rect x=".5" y=".5" width="49" height="6" fill="none" stroke="#f0f0f0"/><rect x="15.5" y="1" width="9" height="5" fill="#ff0000"/><rect x="24.5" y="1" width="7.5" height="5" fill="#008000"/><path d="M12.5 0V7" stroke="#f0f0f0"/><path d="M37.5 0V7" stroke="#f0f0f0"/><rect x="4" y="8" width="6" height="1.600" fill="#ff0000"/><rect x="4" y="11.200" width="6" height="1.600" fill="#ff0000"/><rect x="12" y="8" width="6" height="1.600" fill="#ff0000"/><rect x="12" y="11.200" width="6" height="1.600" fill="#ff0000"/><rect x="20" y="8" width="6" height="1.600" fill="#ff0000"/><rect x="20" y="11.200" width="6" height="1.600" fill="#ff0000"/><rect x="28" y="8" width="6" height="1.600" fill="#ff0000"/><rect x="28" y="11.200" width="6" height="1.600" fill="#ff0000"/><rect x="36" y="8" width="6" height="1.600" fill="#ff0000"/><rect x="36" y="11.200" width="6" height="1.600" fill="#ff0000"/><rect x="44" y="8" width="6" height="1.600" fill="#ff0000"/><rect x="44" y="11.200" width="6" height="1.600" fill="#ff0000"/></svg>
<svg class="r" style="left:1240px;top:1022px" width="14" height="14" viewBox="0 0 14 14"><path d="M3 12a6 6 0 1 1 8 0" stroke="#5a6278" fill="none" stroke-width="1.800"/><path d="M5.500 9.500L9 4.500" stroke="#5a6278" stroke-width="1.800" stroke-linecap="round"/></svg>
<div class="r" style="left:1260px;top:1023px;width:13px;height:12px;background:#6a7088;border-radius:3px;"></div>
<span class="t " style="top:1023px;color:#1a1e28;font-size:12px;left:1260px;width:13px;text-align:center;">2</span>
<span class="t " style="top:1024px;color:#f0f0f0;font-size:12px;left:1278px;">已连接</span>
<svg class="r" style="left:1774px;top:1022px" width="120" height="16" viewBox="0 0 120 16"><rect x="1" y="3" width="16" height="9" rx="2" fill="#8088a0"/><path d="M3.5 6h11M4 9.5h10" stroke="#232733" stroke-dasharray="1.5 1"/><path d="M37 3v11M42 1v12" stroke="#8088a0"/><rect x="35" y="5" width="4" height="6" fill="#8088a0"/><rect x="40" y="3" width="4" height="7" fill="#8088a0"/><circle cx="70" cy="8" r="5" fill="none" stroke="#8088a0" stroke-width="1.4"/><path d="M70 1v14M63 8h14" stroke="#8088a0"/><circle cx="70" cy="8" r="1.6" fill="#8088a0"/><path d="M95 2h2.5v2h2V2h2.5v2h2V2h2v4.5h-1.5l1 7h1v1.5h-12V13.500h1l1-7H95z" fill="#ffffff"/></svg>
</div></body></html>
